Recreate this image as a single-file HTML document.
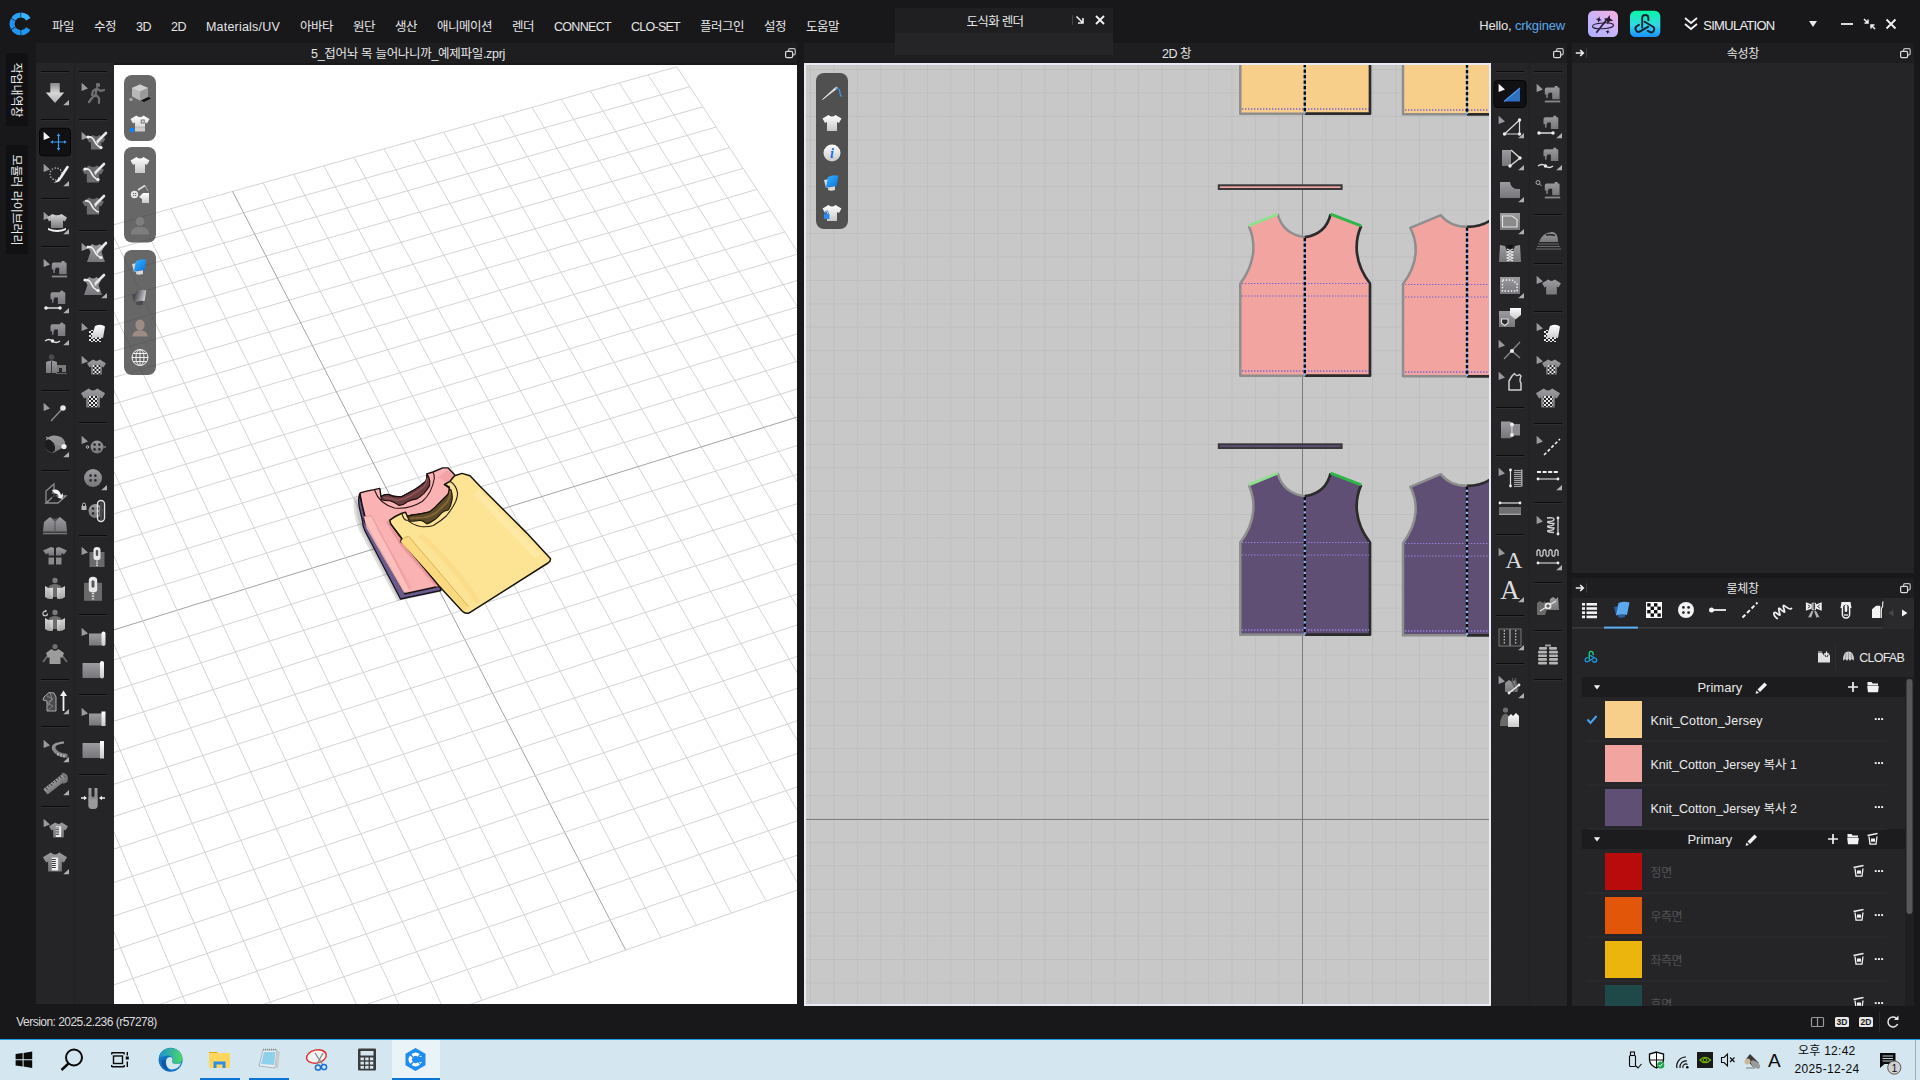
<!DOCTYPE html><html lang="ko"><head><meta charset="utf-8"><title>CLO</title><style>
*{box-sizing:border-box;margin:0;padding:0}
html,body{width:1920px;height:1080px;overflow:hidden;background:#18181b}
body{font-family:"Liberation Sans","Noto Sans CJK KR",sans-serif;font-size:13px;color:#e4e4e4;position:relative}
.abs{position:absolute}
.t{position:absolute;white-space:nowrap;line-height:1}
.menu span{position:absolute;top:18px;font-size:13px;line-height:16px;white-space:nowrap;color:#e6e6e6}
.title{position:absolute;height:20px;background:#1e1e21;font-size:12.5px;line-height:20px;text-align:center;color:#e0e0e0}
.tb{position:absolute;background:#252528}
.sep{position:absolute;height:1px;background:#111113}
.row{position:absolute;left:1582px;width:322px}
svg{position:absolute;overflow:visible}
</style></head><body>
<div class="abs menu" style="left:0;top:0;width:1920px;height:43px;background:#18181b">
<div class="t" id="t1" style="left:52px;top:20.9px;font-size:12.5px;color:#e6e6e6;letter-spacing:-0.508px;">파일</div>
<div class="t" id="t2" style="left:94px;top:20.9px;font-size:12.5px;color:#e6e6e6;letter-spacing:-0.508px;">수정</div>
<div class="t" id="t3" style="left:136px;top:20.9px;font-size:12.5px;color:#e6e6e6;letter-spacing:-0.492px;">3D</div>
<div class="t" id="t4" style="left:171px;top:20.9px;font-size:12.5px;color:#e6e6e6;letter-spacing:-0.492px;">2D</div>
<div class="t" id="t5" style="left:206px;top:20.9px;font-size:12.5px;color:#e6e6e6;letter-spacing:0.204px;">Materials/UV</div>
<div class="t" id="t6" style="left:300px;top:20.9px;font-size:12.5px;color:#e6e6e6;letter-spacing:-0.505px;">아바타</div>
<div class="t" id="t7" style="left:353px;top:20.9px;font-size:12.5px;color:#e6e6e6;letter-spacing:-0.508px;">원단</div>
<div class="t" id="t8" style="left:395px;top:20.9px;font-size:12.5px;color:#e6e6e6;letter-spacing:-0.508px;">생산</div>
<div class="t" id="t9" style="left:437px;top:20.9px;font-size:12.5px;color:#e6e6e6;letter-spacing:-0.503px;">애니메이션</div>
<div class="t" id="t10" style="left:512px;top:20.9px;font-size:12.5px;color:#e6e6e6;letter-spacing:-0.508px;">렌더</div>
<div class="t" id="t11" style="left:554px;top:20.9px;font-size:12.5px;color:#e6e6e6;letter-spacing:-0.688px;">CONNECT</div>
<div class="t" id="t12" style="left:631px;top:20.9px;font-size:12.5px;color:#e6e6e6;letter-spacing:-0.741px;">CLO-SET</div>
<div class="t" id="t13" style="left:700px;top:20.9px;font-size:12.5px;color:#e6e6e6;letter-spacing:-0.504px;">플러그인</div>
<div class="t" id="t14" style="left:764px;top:20.9px;font-size:12.5px;color:#e6e6e6;letter-spacing:-0.508px;">설정</div>
<div class="t" id="t15" style="left:806px;top:20.9px;font-size:12.5px;color:#e6e6e6;letter-spacing:-0.505px;">도움말</div>
</div>
<svg width="0" height="0" style="left:0;top:0"><defs>
<linearGradient id="gg" x1="0" y1="0" x2="0" y2="1"><stop offset="0" stop-color="#9c9ca0"/><stop offset="1" stop-color="#77777b"/></linearGradient>
<linearGradient id="gw" x1="0" y1="0" x2="0" y2="1"><stop offset="0" stop-color="#ffffff"/><stop offset="1" stop-color="#c8c8c8"/></linearGradient>
<linearGradient id="gb" x1="0" y1="0" x2="1" y2="1"><stop offset="0" stop-color="#35b6ff"/><stop offset="1" stop-color="#0a6fe0"/></linearGradient>
<linearGradient id="gpink" x1="1" y1="0" x2="0.2" y2="1"><stop offset="0" stop-color="#fbb0dc"/><stop offset=".6" stop-color="#c4b4fa"/><stop offset="1" stop-color="#b4b0ff"/></linearGradient><linearGradient id="gdn" x1="0" y1="0" x2="0" y2="1"><stop offset="0" stop-color="#8a8a8c"/><stop offset=".5" stop-color="#d8d8d8"/><stop offset="1" stop-color="#b0b0b0"/></linearGradient><linearGradient id="gw2" x1="0" y1="0" x2="0" y2="1"><stop offset="0" stop-color="#d4d4d4"/><stop offset="1" stop-color="#7c7c80"/></linearGradient>
<linearGradient id="ggreen" x1="0" y1="0" x2="0" y2="1"><stop offset="0" stop-color="#08f5a4"/><stop offset=".55" stop-color="#32d8e6"/><stop offset="1" stop-color="#1890ff"/></linearGradient>
<linearGradient id="glogo" x1="0" y1="0" x2="1" y2="1"><stop offset="0" stop-color="#3ec0ff"/><stop offset="1" stop-color="#1478e6"/></linearGradient>
<pattern id="chk" width="4" height="4" patternUnits="userSpaceOnUse"><rect width="4" height="4" fill="#e8e8e8"/><rect width="2" height="2" fill="#222"/><rect x="2" y="2" width="2" height="2" fill="#222"/></pattern>
</defs></svg><svg style="left:0px;top:0px" width="44" height="44" viewBox="0 0 44 44" ><path d="M30.48,29.89 A11.3,11.3 0 0 1 21.29,35.19 L21.12,30.20 A6.3,6.3 0 0 0 26.24,27.24Z" fill="#2196f3"/><path d="M20.51,35.19 A11.3,11.3 0 0 1 11.32,29.89 L15.56,27.24 A6.3,6.3 0 0 0 20.68,30.20Z" fill="#2196f3"/><path d="M10.92,29.21 A11.3,11.3 0 0 1 10.92,18.59 L15.34,20.94 A6.3,6.3 0 0 0 15.34,26.86Z" fill="#2591f0"/><path d="M11.32,17.91 A11.3,11.3 0 0 1 20.51,12.61 L20.68,17.60 A6.3,6.3 0 0 0 15.56,20.56Z" fill="#2aa2f6"/><path d="M21.29,12.61 A11.3,11.3 0 0 1 30.48,17.91 L26.24,20.56 A6.3,6.3 0 0 0 21.12,17.60Z" fill="#38b4fc"/></svg>
<div class="abs" style="left:895px;top:8px;width:218px;height:47px;background:#252528;z-index:5"></div>
<div class="abs" style="left:895px;top:8px;width:218px;height:25px;background:#1f1f22;z-index:5"></div>
<div class="t" id="t16" style="left:966.6px;top:15.6px;font-size:12.5px;color:#e6e6e6;letter-spacing:-0.731px;z-index:6;">도식화 렌더</div>
<svg style="z-index:6;left:0px;top:0px" width="1120" height="60" viewBox="0 0 1120 60" ><line x1="1072.5" y1="15" x2="1072.5" y2="25" stroke="#444" stroke-width="1"/><path d="M1076.5,16.5 L1083,23 M1083,18 V23 H1078" stroke="#f0f0f0" stroke-width="1.6" fill="none"/><path d="M1096,16 L1104,24 M1104,16 L1096,24" stroke="#f4f4f4" stroke-width="1.8" fill="none"/></svg>
<div class="t" id="t17" style="left:1479.3px;top:19px;font-size:13px;color:#e6e6e6;letter-spacing:-0.164px;">Hello, <span style="color:#5ba8e8">crkginew</span></div>
<svg style="left:0px;top:0px" width="1920" height="44" viewBox="0 0 1920 44" ><rect x="1588" y="10.8" width="30" height="26.2" rx="5.5" fill="url(#gpink)"/><g stroke="#2a1c30" fill="none"><path d="M1596.3,32.7 L1606.8,19.5" stroke-width="1.7"/><ellipse cx="1603" cy="25.8" rx="10.6" ry="2.9" stroke-width="1" transform="rotate(-3 1603 25.8)"/></g><path d="M1607.3,13.8 L1608.644,17.256 L1612.1,18.6 L1608.644,19.944000000000003 L1607.3,23.400000000000002 L1605.956,19.944000000000003 L1602.5,18.6 L1605.956,17.256Z M1597.8,17.5 L1598.668,19.732000000000003 L1600.8999999999999,20.6 L1598.668,21.468 L1597.8,23.700000000000003 L1596.932,21.468 L1594.7,20.6 L1596.932,19.732000000000003Z M1609,28.200000000000003 L1609.672,29.928 L1611.4,30.6 L1609.672,31.272000000000002 L1609,33.0 L1608.328,31.272000000000002 L1606.6,30.6 L1608.328,29.928Z" fill="#2a1c30" transform="rotate(12 1603 25)"/><rect x="1630" y="10.8" width="30.3" height="26.2" rx="5.5" fill="url(#ggreen)"/><g fill="none" stroke="#14222e" stroke-width="1.9" transform="translate(1645 25.3) scale(1.0)"><path d="M-2.8,2.200 V-7.200 A3.1,3.1 0 0 1 3.4,-7.200 V-5" stroke="#14222e" stroke-linecap="round" transform="rotate(0)"/><path d="M-2.8,2.200 V-7.200 A3.1,3.1 0 0 1 3.4,-7.200 V-5" stroke="#14222e" stroke-linecap="round" transform="rotate(120)"/><path d="M-2.8,2.200 V-7.200 A3.1,3.1 0 0 1 3.4,-7.200 V-5" stroke="#14222e" stroke-linecap="round" transform="rotate(240)"/></g><path d="M1685,18 l6,5 6,-5 M1685,24 l6,5 6,-5" stroke="#f2f2f2" stroke-width="1.8" fill="none"/><path d="M1809,21 h8 l-4,6z" fill="#e8e8e8"/><path d="M1841,24 h12" stroke="#f2f2f2" stroke-width="1.8"/><path d="M1864,19 l4,4 M1868,19.5 V23 H1864.5 M1875,29 l-4,-4 M1871,28.5 V25 H1874.5" stroke="#f2f2f2" stroke-width="1.5" fill="none"/><path d="M1886.5,19.5 l9,9 M1895.5,19.5 l-9,9" stroke="#f2f2f2" stroke-width="1.8"/></svg><div class="t" id="t18" style="left:1703.3px;top:19px;font-size:13px;color:#eee;letter-spacing:-0.730px;">SIMULATION</div>
<div class="abs" style="left:6px;top:53px;width:22px;height:73px;background:#111113"></div>
<div class="abs" style="left:6px;top:145px;width:22px;height:109px;background:#111113"></div>
<div class="t" style="left:15.6px;top:90.3px;width:0;height:0"><div class="t" style="left:-40px;top:-6px;width:80px;text-align:center;font-size:12px;color:#ececec;transform:rotate(90deg);letter-spacing:-.1px">작업내역창</div></div>
<div class="t" style="left:15.6px;top:200.2px;width:0;height:0"><div class="t" style="left:-60px;top:-6px;width:120px;text-align:center;font-size:12px;color:#ececec;transform:rotate(90deg);letter-spacing:-.05px">모듈러 라이브러리</div></div>
<div class="title" style="left:36px;top:43px;width:761px"></div>
<div class="t" id="t19" style="left:311px;top:47.8px;font-size:12.5px;color:#e4e4e4;letter-spacing:-0.301px;">5_접어놔 목 늘어나니까_예제파일.zprj</div>
<svg style="left:785px;top:48px" width="12" height="10" viewBox="0 0 12 10" ><rect x="3.6" y="0.6" width="6.6" height="6.2" rx="1.3" fill="none" stroke="#bdbdbd" stroke-width="1.2"/><rect x="0.6" y="3.4" width="7" height="6.2" rx="1.3" fill="#1e1e21" stroke="#dcdcdc" stroke-width="1.2"/></svg>
<div class="tb" style="left:36px;top:63px;width:78px;height:941px"></div>
<div class="abs" style="left:74px;top:63px;width:1px;height:941px;background:#202023"></div>
<svg style="left:0px;top:0px" width="120" height="1010" viewBox="0 0 120 1010" ><rect x="41" y="71" width="28" height="1" fill="#0b0b0c"/><rect x="41" y="72" width="28" height="1" fill="#2e2e31"/><rect x="41" y="119" width="28" height="1" fill="#0b0b0c"/><rect x="41" y="120" width="28" height="1" fill="#2e2e31"/><rect x="41" y="198" width="28" height="1" fill="#0b0b0c"/><rect x="41" y="199" width="28" height="1" fill="#2e2e31"/><rect x="41" y="246" width="28" height="1" fill="#0b0b0c"/><rect x="41" y="247" width="28" height="1" fill="#2e2e31"/><rect x="41" y="390" width="28" height="1" fill="#0b0b0c"/><rect x="41" y="391" width="28" height="1" fill="#2e2e31"/><rect x="41" y="470" width="28" height="1" fill="#0b0b0c"/><rect x="41" y="471" width="28" height="1" fill="#2e2e31"/><rect x="41" y="679" width="28" height="1" fill="#0b0b0c"/><rect x="41" y="680" width="28" height="1" fill="#2e2e31"/><rect x="41" y="726" width="28" height="1" fill="#0b0b0c"/><rect x="41" y="727" width="28" height="1" fill="#2e2e31"/><rect x="41" y="806" width="28" height="1" fill="#0b0b0c"/><rect x="41" y="807" width="28" height="1" fill="#2e2e31"/><rect x="79" y="71" width="28" height="1" fill="#0b0b0c"/><rect x="79" y="72" width="28" height="1" fill="#2e2e31"/><rect x="79" y="119" width="28" height="1" fill="#0b0b0c"/><rect x="79" y="120" width="28" height="1" fill="#2e2e31"/><rect x="79" y="230" width="28" height="1" fill="#0b0b0c"/><rect x="79" y="231" width="28" height="1" fill="#2e2e31"/><rect x="79" y="310" width="28" height="1" fill="#0b0b0c"/><rect x="79" y="311" width="28" height="1" fill="#2e2e31"/><rect x="79" y="422" width="28" height="1" fill="#0b0b0c"/><rect x="79" y="423" width="28" height="1" fill="#2e2e31"/><rect x="79" y="535" width="28" height="1" fill="#0b0b0c"/><rect x="79" y="536" width="28" height="1" fill="#2e2e31"/><rect x="79" y="614" width="28" height="1" fill="#0b0b0c"/><rect x="79" y="615" width="28" height="1" fill="#2e2e31"/><rect x="79" y="694" width="28" height="1" fill="#0b0b0c"/><rect x="79" y="695" width="28" height="1" fill="#2e2e31"/><rect x="79" y="774" width="28" height="1" fill="#0b0b0c"/><rect x="79" y="775" width="28" height="1" fill="#2e2e31"/><g transform="translate(55 93)"><path d="M-4.700,-10 H4.700 V-0.5 H9.200 L0,10 L-9.200,-0.5 H-4.700Z" fill="url(#gdn)"/><path d="M8.2,12.3 L14,7 L14,12.3Z" fill="#b0b0b0"/></g><g transform="translate(55 142)"><rect x="-15.500" y="-13.700" width="31" height="27.500" rx="3.5" fill="#111113" stroke="#050506"/><path d="M-11.4,-10.2 L-11.4,-2 L-5,-4.4Z" fill="#f4f4f4"/><g stroke="#3a9af0" stroke-width="1.2" fill="#3a9af0"><path d="M-3,0 H10 M3.5,-7 V7" fill="none"/><path d="M3.5,-8.800 l1.800,2.800 h-3.600z M3.5,8.800 l1.800,-2.800 h-3.600z M-4.800,0 l2.800,-1.800 v3.600z M11.800,0 l-2.800,-1.800 v3.600z" stroke="none"/></g></g><g transform="translate(55 174)"><path d="M-11.4,-10.2 L-11.4,-2 L-5,-4.4Z" fill="#9a9a9e"/><circle cx="1" cy="0" r="6" fill="none" stroke="#bdbdbd" stroke-width="1.3" stroke-dasharray="1.3 1.6"/><path d="M6,3 L12.5,-7" stroke="#eee" stroke-width="2.6" stroke-linecap="round"/><path d="M6.5,4 Q5,9 -1.5,8.5 Q3,7 3.5,3Z" fill="#eee"/><path d="M8.2,12.3 L14,7 L14,12.3Z" fill="#b0b0b0"/></g><g transform="translate(55 222)"><path d="M-11.4,-10.2 L-11.4,-2 L-5,-4.4Z" fill="#9a9a9e"/><path d="M-2.5,-8 Q2,-5.5 6.5,-8 L12,-4.5 L10,-0.5 L8,-1.5 L8,6 L-4,6 L-4,-1.5 L-6,-0.5 L-8,-4.5Z" fill="url(#gw2)"/><path d="M-7,6 Q2,10 11,6 L11,8 Q2,12 -7,8Z" fill="#f0f0f0"/><path d="M8.2,12.3 L14,7 L14,12.3Z" fill="#b0b0b0"/></g><g transform="translate(55 269)"><path d="M-11.4,-10.2 L-11.4,-2 L-5,-4.4Z" fill="#9a9a9e"/><g transform="translate(4.2 0)"><path d="M-7.4,-4.5 Q-7.4,-6.5 -5.4,-6.5 H2.4 V-8 H5.4 V-6.5 H6.4 Q7.4,-6.5 7.4,-5.5 V5.3 H0 V-1.3 H-3.7 V0.5 H-4.4 V3.9 H-5.9 V0.5 H-7.4Z" fill="url(#gg)"/></g><rect x="-3.2" y="6.6" width="15.4" height="1.8" fill="#88888c"/></g><g transform="translate(55 301)"><g transform="translate(2.9 -2.2)"><path d="M-7.4,-4.5 Q-7.4,-6.5 -5.4,-6.5 H2.4 V-8 H5.4 V-6.5 H6.4 Q7.4,-6.5 7.4,-5.5 V5.3 H0 V-1.3 H-3.7 V0.5 H-4.4 V3.9 H-5.9 V0.5 H-7.4Z" fill="url(#gg)"/></g><path d="M-9,7 h14" stroke="#e8e8e8" stroke-width="1.4"/><circle cx="-9" cy="7" r="1.8" fill="#eee"/><circle cx="5" cy="7" r="1.8" fill="#eee"/><path d="M8.2,12.3 L14,7 L14,12.3Z" fill="#b0b0b0"/></g><g transform="translate(55 333)"><g transform="translate(2.9 -2.2)"><path d="M-7.4,-4.5 Q-7.4,-6.5 -5.4,-6.5 H2.4 V-8 H5.4 V-6.5 H6.4 Q7.4,-6.5 7.4,-5.5 V5.3 H0 V-1.3 H-3.7 V0.5 H-4.4 V3.9 H-5.9 V0.5 H-7.4Z" fill="url(#gg)"/></g><path d="M-10,8 Q-6,5 -2.5,8 T5,8" stroke="#e0e0e0" stroke-width="1.4" fill="none"/><circle cx="-2.5" cy="8" r="1.8" fill="#eee"/><path d="M8.2,12.3 L14,7 L14,12.3Z" fill="#b0b0b0"/></g><g transform="translate(55 365)"><circle cx="-3.5" cy="-8" r="2.8" fill="#4a4a4c"/><path d="M-9,-3 Q-3.5,-6 2,-3 V8 H-9Z" fill="url(#gg)"/><path d="M-3.5,-4 V8" stroke="#3a3a3c" stroke-width="1"/><path d="M2,0 H11 V7 H7 V3 H4 V7 H2Z" fill="#7a7a7a"/><path d="M1,8.5 h11" stroke="#666" stroke-width="1"/></g><g transform="translate(55 413)"><path d="M-11.4,-10.2 L-11.4,-2 L-5,-4.4Z" fill="#9a9a9e"/><path d="M-4,8 L7,-4" stroke="#8c8c8c" stroke-width="1.4"/><circle cx="8" cy="-5" r="2.8" fill="#e4e4e4"/></g><g transform="translate(55 445)"><path d="M-9,-6 Q-3,-12 6,-8 Q12,-4 9,2 L-2,8 Q-9,8 -9,0Z" fill="url(#gg)"/><ellipse cx="-5" cy="1" rx="4.5" ry="7" transform="rotate(-25 -5 1)" fill="#1c1c1e"/><path d="M-9,-8 L8,1" stroke="#9a9a9a" stroke-width="1.2"/><circle cx="9" cy="1.5" r="2.6" fill="#f0f0f0"/><path d="M8.2,12.3 L14,7 L14,12.3Z" fill="#b0b0b0"/></g><g transform="translate(55 493)"><path d="M-9,-2 L-1,-9 V3 L-9,10Z M-9,10 L-1,3 H11 L3,10Z" fill="none" stroke="#8c8c8c" stroke-width="1.3"/><path d="M-3,-3 Q4,-5 6,2 L8,0 L7.5,6 L2,4.5 L4,3.5 Q2,-1 -3,1Z" fill="#f2f2f2"/><path d="M-3,-3 L-3,5 L3,5" fill="#111" opacity=".6"/></g><g transform="translate(55 525)"><path d="M-5,-8 L0,-5 L5,-8 L11,-3 L12,6 H-12 L-11,-3Z" fill="url(#gg)"/><path d="M-5,-8 L0,-3 L5,-8 L0,-6Z" fill="#555"/><path d="M0,-3 V6 M-12,6.5 h24" stroke="#555" stroke-width="1"/><path d="M-12,8.5 h24" stroke="#777" stroke-width="1.6"/></g><g transform="translate(55 557)"><path d="M-4,-10 L-1,-9 V-1.5 H-6.5 V-4 L-9,-2.5 L-12,-6.5Z M4,-10 L1,-9 V-1.5 H6.5 V-4 L9,-2.5 L12,-6.5Z" fill="url(#gg)"/><rect x="-6.5" y="0.5" width="5.5" height="7" fill="#8a8a8a"/><rect x="1" y="0.5" width="5.5" height="7" fill="#8a8a8a"/></g><g transform="translate(55 589)"><circle cx="0" cy="-8.5" r="2.7" fill="#7a7a7a"/><path d="M-6,-3 Q0,-7 6,-3 L4,8 H-4Z" fill="#6e6e6e"/><path d="M-10,-3 Q-6,0 -2,-1.5 V9.5 Q-6,11 -10,8Z" fill="url(#gw)" opacity=".8"/><path d="M10,-3 Q6,0 2,-1.5 V9.5 Q6,11 10,8Z" fill="url(#gw)" opacity=".8"/></g><g transform="translate(55 621)"><circle cx="0" cy="-8.5" r="2.7" fill="#7a7a7a"/><path d="M-6,-3 Q0,-7 6,-3 L4,8 H-4Z" fill="#6e6e6e"/><path d="M-10,-3 Q-6,0 -2,-1.5 V9.5 Q-6,11 -10,8Z" fill="url(#gw)" opacity=".8"/><path d="M10,-3 Q6,0 2,-1.5 V9.5 Q6,11 10,8Z" fill="url(#gw)" opacity=".8"/><path d="M-7.500,-7.500 a2.300,2.300 0 1 1 -2.300,-2.300" fill="none" stroke="#d0d0d0" stroke-width="1.1"/><path d="M-10.200,-11.600 l2.400,1.600 -2.400,1.400z" fill="#d0d0d0"/></g><g transform="translate(55 655)"><circle cx="0" cy="-8.5" r="2.6" fill="#6e6e6e"/><path d="M-12,7 L-6,-1 M12,7 L6,-1" stroke="#6a6a6a" stroke-width="2"/><path d="M-3.5,-6 Q0,-2.5 3.5,-6 L9,-2 L7,3 L5.5,2 V9 H-5.5 V2 L-7,3 L-9,-2Z" fill="#9c9c9c"/></g><g transform="translate(55 702)"><path d="M-11,-5 L-6,-9.5 L-1,-9 L1,-5 V9 H-8 V-1 L-12,-2Z" fill="#4a4a4c" stroke="#aaa" stroke-width="1"/><path d="M-8,-6 L-2,-3 L-8,1 L-2,4 L-7,8 M-5,-9 L-3,-3 L-7,4" stroke="#999" stroke-width=".7" fill="none"/><path d="M8.5,-7 V9" stroke="#f0f0f0" stroke-width="1.8"/><path d="M8.5,-11.5 L12,-6 H5Z" fill="#f0f0f0"/><path d="M8.2,12.3 L14,7 L14,12.3Z" fill="#b0b0b0"/></g><g transform="translate(55 750)"><path d="M-11.4,-10.2 L-11.4,-2 L-5,-4.4Z" fill="#9a9a9e"/><path d="M9,-8.500 Q-5,-7.500 -3,-0.500 Q0,6.500 12.500,8 V4 Q3.500,3 0.500,-1.500 Q-1,-5.500 9,-6.500Z" fill="url(#gg)"/><path d="M3,3 v3 M6,4 v3 M9,4.6 v3" stroke="#ddd" stroke-width=".9"/><path d="M8.2,12.3 L14,7 L14,12.3Z" fill="#b0b0b0"/></g><g transform="translate(55 783)"><g transform="rotate(-38)"><rect x="-13" y="-2.5" width="24" height="7" rx="1" fill="url(#gg)"/><path d="M-10,-2.5 v3 M-7,-2.5 v2 M-4,-2.5 v3 M-1,-2.5 v2 M2,-2.5 v3 M5,-2.5 v2 M8,-2.5 v3" stroke="#2a2a2c" stroke-width=".9"/></g><path d="M7,-9 Q13,-8 11,-2 Q9,0 6,-2" fill="none" stroke="#777" stroke-width="3"/><path d="M8.2,12.3 L14,7 L14,12.3Z" fill="#b0b0b0"/></g><g transform="translate(55 829)"><path d="M-11.4,-10.2 L-11.4,-2 L-5,-4.4Z" fill="#9a9a9e"/><g transform="translate(3.5 1) scale(.82)"><path transform="translate(0 0) scale(1)" d="M-4,-9 Q0,-5.5 4,-9 L11.5,-4.5 L8.5,0.5 L6.5,-0.5 L6.5,9 L-6.5,9 L-6.5,-0.5 L-8.5,0.5 L-11.5,-4.5Z" fill="url(#gg)"/><rect x="-3.2" y="-4.5" width="6.4" height="13" fill="#eee"/><path d="M-3.2,-2.5 h4 M-3.2,-0.5 h4 M-3.2,1.5 h4 M-3.2,3.5 h4 M-3.2,5.5 h4" stroke="#222" stroke-width=".9"/></g></g><g transform="translate(55 862)"><g transform="translate(0 0)"><path transform="translate(0 0) scale(1.05)" d="M-4,-9 Q0,-5.5 4,-9 L11.5,-4.5 L8.5,0.5 L6.5,-0.5 L6.5,9 L-6.5,9 L-6.5,-0.5 L-8.5,0.5 L-11.5,-4.5Z" fill="url(#gg)"/><rect x="-3.2" y="-4.5" width="6.4" height="13" fill="#eee"/><path d="M-3.2,-2.5 h4 M-3.2,-0.5 h4 M-3.2,1.5 h4 M-3.2,3.5 h4 M-3.2,5.5 h4" stroke="#222" stroke-width=".9"/></g><path d="M8.2,12.3 L14,7 L14,12.3Z" fill="#b0b0b0"/></g><g transform="translate(93 93)"><path d="M-11.4,-10.2 L-11.4,-2 L-5,-4.4Z" fill="#9a9a9e"/><g fill="#707070" stroke="#707070"><circle cx="5" cy="-8" r="2.2" stroke="none"/><path d="M4,-5 L2.5,1.5 L6,5 L6,10 M2.5,1.5 L-1,5 L-4,9 M4,-4.5 L0,-2 L-1,2 M4.5,-4 L8,-2 L11,-3" fill="none" stroke-width="2.2" stroke-linecap="round" stroke-linejoin="round"/></g></g><g transform="translate(93 142)"><path d="M-11.4,-10.2 L-11.4,-2 L-5,-4.4Z" fill="#9a9a9e"/><path transform="translate(3.2 0.3) scale(0.8)" d="M-4,-9 Q0,-5.5 4,-9 L11.5,-4.5 L8.5,0.5 L6.5,-0.5 L6.5,9 L-6.5,9 L-6.5,-0.5 L-8.5,0.5 L-11.5,-4.5Z" fill="#6c6c70"/><g transform="translate(3 0)"><path d="M-8,-5 C-2,-6 -2,0 1,3 S5,6 6,6" stroke="#f0f0f0" stroke-width="1.6" fill="none"/><circle cx="-8" cy="-5" r="1.6" fill="#f0f0f0"/><circle cx="5" cy="5.5" r="1.6" fill="#f0f0f0"/></g><g transform="translate(2 0)"><path d="M3,-1 L11,-9" stroke="#e6e6e6" stroke-width="2.6" stroke-linecap="round"/><path d="M2,2 L1,-1.5 L4,1Z" fill="#ddd"/></g></g><g transform="translate(93 174)"><path transform="translate(0 0) scale(0.95)" d="M-4,-9 Q0,-5.5 4,-9 L11.5,-4.5 L8.5,0.5 L6.5,-0.5 L6.5,9 L-6.5,9 L-6.5,-0.5 L-8.5,0.5 L-11.5,-4.5Z" fill="#6c6c70"/><g transform="translate(0 0)"><path d="M-8,-5 C-2,-6 -2,0 1,3 S5,6 6,6" stroke="#f0f0f0" stroke-width="1.6" fill="none"/><circle cx="-8" cy="-5" r="1.6" fill="#f0f0f0"/><circle cx="5" cy="5.5" r="1.6" fill="#f0f0f0"/></g><g transform="translate(0 -1)"><path d="M3,-1 L11,-9" stroke="#e6e6e6" stroke-width="2.6" stroke-linecap="round"/><path d="M2,2 L1,-1.5 L4,1Z" fill="#ddd"/></g></g><g transform="translate(93 206)"><path transform="translate(0 0) scale(0.95)" d="M-4,-9 Q0,-5.5 4,-9 L11.5,-4.5 L8.5,0.5 L6.5,-0.5 L6.5,9 L-6.5,9 L-6.5,-0.5 L-8.5,0.5 L-11.5,-4.5Z" fill="#6c6c70"/><g transform="translate(0 0)"><path d="M-8,-5 C-2,-6 -2,0 1,3 S5,6 6,6" stroke="#f0f0f0" stroke-width="1.6" fill="none"/></g><g transform="translate(0 -1)"><path d="M3,-1 L11,-9" stroke="#e6e6e6" stroke-width="2.6" stroke-linecap="round"/><path d="M2,2 L1,-1.5 L4,1Z" fill="#ddd"/></g></g><g transform="translate(93 253)"><path d="M-11.4,-10.2 L-11.4,-2 L-5,-4.4Z" fill="#9a9a9e"/><path transform="translate(3 0)" d="M-3.5,-9 Q0,-6 3.5,-9 L8,-6 L5.5,-1 L9,9 L-9,9 L-5.5,-1 L-8,-6Z" fill="url(#gg)"/><g transform="translate(3 -1)"><path d="M-8,-5 C-2,-6 -2,0 1,3 S5,6 6,6" stroke="#f0f0f0" stroke-width="1.6" fill="none"/><circle cx="-8" cy="-5" r="1.6" fill="#f0f0f0"/><circle cx="5" cy="5.5" r="1.6" fill="#f0f0f0"/></g><g transform="translate(2 -1)"><path d="M3,-1 L11,-9" stroke="#e6e6e6" stroke-width="2.6" stroke-linecap="round"/><path d="M2,2 L1,-1.5 L4,1Z" fill="#ddd"/></g></g><g transform="translate(93 286)"><path transform="translate(0 0)" d="M-3.5,-9 Q0,-6 3.5,-9 L8,-6 L5.5,-1 L9,9 L-9,9 L-5.5,-1 L-8,-6Z" fill="url(#gg)"/><g transform="translate(0 -1)"><path d="M-8,-5 C-2,-6 -2,0 1,3 S5,6 6,6" stroke="#f0f0f0" stroke-width="1.6" fill="none"/><circle cx="-8" cy="-5" r="1.6" fill="#f0f0f0"/><circle cx="5" cy="5.5" r="1.6" fill="#f0f0f0"/></g><g transform="translate(0 -2)"><path d="M3,-1 L11,-9" stroke="#e6e6e6" stroke-width="2.6" stroke-linecap="round"/><path d="M2,2 L1,-1.5 L4,1Z" fill="#ddd"/></g><path d="M8.2,12.3 L14,7 L14,12.3Z" fill="#b0b0b0"/></g><g transform="translate(93 333)"><path d="M-11.4,-10.2 L-11.4,-2 L-5,-4.4Z" fill="#9a9a9e"/><rect x="-4" y="-3" width="12" height="12" fill="url(#chk)"/><path d="M-2,6 L2,-7 Q8,-9.5 12,-6.5 L10,5 Q5,3 -2,6Z" fill="url(#gw)"/><path d="M-6,-4 L-4,-3 L-4,9 L8,9 L8,10 L-6,10Z" fill="#252528"/><path d="M-5,-4 L3,3" stroke="#252528" stroke-width="0"/></g><g transform="translate(93 366)"><path d="M-11.4,-10.2 L-11.4,-2 L-5,-4.4Z" fill="#9a9a9e"/><g transform="translate(3.5 1)"><path transform="translate(0 0) scale(0.82)" d="M-4,-9 Q0,-5.5 4,-9 L11.5,-4.5 L8.5,0.5 L6.5,-0.5 L6.5,9 L-6.5,9 L-6.5,-0.5 L-8.5,0.5 L-11.5,-4.5Z" fill="url(#gg)"/><rect x="-3.5" y="-2" width="7" height="9" fill="url(#chk)"/></g></g><g transform="translate(93 398)"><path transform="translate(0 0) scale(1.05)" d="M-4,-9 Q0,-5.5 4,-9 L11.5,-4.5 L8.5,0.5 L6.5,-0.5 L6.5,9 L-6.5,9 L-6.5,-0.5 L-8.5,0.5 L-11.5,-4.5Z" fill="url(#gg)"/><rect x="-4.5" y="-2" width="9" height="11" fill="url(#chk)"/></g><g transform="translate(93 446)"><path d="M-11.4,-10.2 L-11.4,-2 L-5,-4.4Z" fill="#9a9a9e"/><g transform="translate(4 1)"><circle r="6.5" fill="url(#gg)"/><circle cx="-2.4" cy="-2.4" r="1.3" fill="#2a2a2c"/><circle cx="-2.4" cy="2.4" r="1.3" fill="#2a2a2c"/><circle cx="2.4" cy="-2.4" r="1.3" fill="#2a2a2c"/><circle cx="2.4" cy="2.4" r="1.3" fill="#2a2a2c"/></g><path d="M-4,1 h-1.5 M10.5,1 h2.5" stroke="#aaa" stroke-width="1"/><circle cx="-5.5" cy="1" r="1.3" fill="none" stroke="#ccc" stroke-width=".8"/></g><g transform="translate(93 478)"><g transform="translate(0 0)"><circle r="9" fill="url(#gg)"/><circle cx="-2.4" cy="-2.4" r="1.3" fill="#2a2a2c"/><circle cx="-2.4" cy="2.4" r="1.3" fill="#2a2a2c"/><circle cx="2.4" cy="-2.4" r="1.3" fill="#2a2a2c"/><circle cx="2.4" cy="2.4" r="1.3" fill="#2a2a2c"/></g><path d="M8.2,12.3 L14,7 L14,12.3Z" fill="#b0b0b0"/></g><g transform="translate(93 510)"><g transform="translate(-9 -4)"><rect x="-2.5" y="0" width="5" height="4" fill="#b8b8b8"/><path d="M-1.5,0 v-1.5 a1.5,1.5 0 0 1 3,0 v1.5" fill="none" stroke="#b8b8b8" stroke-width="1"/></g><g transform="translate(2.5 1)"><circle r="7" fill="url(#gg)"/><circle cx="-2.4" cy="-2.4" r="1.3" fill="#2a2a2c"/><circle cx="-2.4" cy="2.4" r="1.3" fill="#2a2a2c"/><circle cx="2.4" cy="-2.4" r="1.3" fill="#2a2a2c"/><circle cx="2.4" cy="2.4" r="1.3" fill="#2a2a2c"/></g><path d="M7,-7.500 a2,2 0 0 1 2.500,0 v17 a2,2 0 0 1 -2.500,0z" fill="#4a4a4d"/><rect x="4.500" y="-9.500" width="7" height="21" rx="3.5" fill="none" stroke="#e4e4e4" stroke-width="1.4"/></g><g transform="translate(93 557)"><path d="M-11.4,-10.2 L-11.4,-2 L-5,-4.4Z" fill="#9a9a9e"/><g transform="translate(4 1)"><rect x="-7.5" y="-6" width="15" height="15" fill="#6a6a6a"/><path d="M0,-2 V9" stroke="#d8d8d8" stroke-width="2" stroke-dasharray="1.2 1"/><path d="M-3.5,-8 Q-3.5,-11 0,-11 Q3.5,-11 3.5,-8 V0 Q3.5,2 0,2 Q-3.5,2 -3.5,0Z" fill="#e8e8e8"/><rect x="-1.2" y="-8" width="2.4" height="6" rx="1" fill="#555"/></g></g><g transform="translate(93 590)"><g transform="scale(1.2)"><g transform="translate(0 0)"><rect x="-7.5" y="-6" width="15" height="15" fill="#6a6a6a"/><path d="M0,-2 V9" stroke="#d8d8d8" stroke-width="2" stroke-dasharray="1.2 1"/><path d="M-3.5,-8 Q-3.5,-11 0,-11 Q3.5,-11 3.5,-8 V0 Q3.5,2 0,2 Q-3.5,2 -3.5,0Z" fill="#e8e8e8"/><rect x="-1.2" y="-8" width="2.4" height="6" rx="1" fill="#555"/></g></g></g><g transform="translate(93 638)"><path d="M-11.4,-10.2 L-11.4,-2 L-5,-4.4Z" fill="#9a9a9e"/><g transform="translate(4 1)"><rect x="-8.0" y="-5.5" width="13" height="12" fill="url(#gg)"/><rect x="4.5" y="-7.5" width="4" height="14.5" rx="2" fill="url(#gw)"/></g></g><g transform="translate(93 670)"><g transform="translate(0 0)"><rect x="-10.5" y="-7.0" width="18" height="15" fill="url(#gg)"/><rect x="7.0" y="-9.0" width="4" height="17.5" rx="2" fill="url(#gw)"/></g></g><g transform="translate(93 718)"><path d="M-11.4,-10.2 L-11.4,-2 L-5,-4.4Z" fill="#9a9a9e"/><g transform="translate(4 1)"><rect x="-8.0" y="-5.5" width="13" height="12" fill="url(#gg)"/><rect x="4.5" y="-7.5" width="4" height="14.5" rx="0" fill="url(#gw)"/></g></g><g transform="translate(93 750)"><g transform="translate(0 0)"><rect x="-10.5" y="-7.0" width="18" height="15" fill="url(#gg)"/><rect x="7.0" y="-9.0" width="4" height="17.5" rx="0" fill="url(#gw)"/></g></g><g transform="translate(93 798)"><path d="M-4.5,-10 H-1.5 V-2 Q0,0 1.5,-2 V-10 H4.5 V8 Q4.5,11 0,11 Q-4.5,11 -4.5,8Z" fill="url(#gg)"/><path d="M-4.5,-1 Q0,4 4.5,-1 V8 Q4.5,11 0,11 Q-4.5,11 -4.5,8Z" fill="#9a9a9a"/><path d="M-12,0 h4 M12,0 h-4" stroke="#eee" stroke-width="1.3"/><path d="M-9,-2.2 l3,2.2 -3,2.2z M9,-2.2 l-3,2.2 3,2.2z" fill="#eee"/></g></svg>
<div class="abs" style="left:114px;top:65px;width:683px;height:939px;background:#fff;overflow:hidden">
<svg style="left:0;top:0" width="683" height="939" viewBox="114 65 683 939">
<g stroke-width="1" fill="none"><line x1="676.8" y1="66.8" x2="1137.0" y2="771.4" stroke="#d4d4d4"/><line x1="676.8" y1="66.8" x2="-244.2" y2="325.2" stroke="#d4d4d4"/><line x1="648.1" y1="74.8" x2="1104.2" y2="782.9" stroke="#d4d4d4"/><line x1="689.8" y1="86.7" x2="-235.4" y2="348.1" stroke="#d4d4d4"/><line x1="619.3" y1="82.9" x2="1071.2" y2="794.4" stroke="#d4d4d4"/><line x1="702.9" y1="106.8" x2="-226.6" y2="371.1" stroke="#d4d4d4"/><line x1="590.4" y1="91.0" x2="1038.0" y2="806.0" stroke="#d4d4d4"/><line x1="716.2" y1="127.1" x2="-217.6" y2="394.5" stroke="#d4d4d4"/><line x1="561.3" y1="99.2" x2="1004.7" y2="817.7" stroke="#d4d4d4"/><line x1="729.6" y1="147.6" x2="-208.6" y2="418.1" stroke="#d4d4d4"/><line x1="532.1" y1="107.4" x2="971.2" y2="829.4" stroke="#d4d4d4"/><line x1="743.1" y1="168.4" x2="-199.5" y2="442.0" stroke="#d4d4d4"/><line x1="502.8" y1="115.6" x2="937.5" y2="841.1" stroke="#d4d4d4"/><line x1="756.8" y1="189.4" x2="-190.2" y2="466.2" stroke="#d4d4d4"/><line x1="473.3" y1="123.9" x2="903.6" y2="853.0" stroke="#d4d4d4"/><line x1="770.7" y1="210.6" x2="-180.8" y2="490.6" stroke="#d4d4d4"/><line x1="443.7" y1="132.2" x2="869.6" y2="864.9" stroke="#d4d4d4"/><line x1="784.7" y1="232.0" x2="-171.4" y2="515.4" stroke="#d4d4d4"/><line x1="413.9" y1="140.5" x2="835.3" y2="876.8" stroke="#d4d4d4"/><line x1="798.9" y1="253.7" x2="-161.8" y2="540.4" stroke="#d4d4d4"/><line x1="384.1" y1="148.9" x2="800.9" y2="888.9" stroke="#d4d4d4"/><line x1="813.2" y1="275.7" x2="-152.1" y2="565.7" stroke="#d4d4d4"/><line x1="354.0" y1="157.3" x2="766.2" y2="901.0" stroke="#d4d4d4"/><line x1="827.7" y1="297.8" x2="-142.3" y2="591.4" stroke="#d4d4d4"/><line x1="323.9" y1="165.8" x2="731.4" y2="913.2" stroke="#d4d4d4"/><line x1="842.3" y1="320.2" x2="-132.3" y2="617.3" stroke="#d4d4d4"/><line x1="293.6" y1="174.3" x2="696.4" y2="925.4" stroke="#d4d4d4"/><line x1="857.1" y1="342.9" x2="-122.3" y2="643.6" stroke="#d4d4d4"/><line x1="263.1" y1="182.9" x2="661.1" y2="937.7" stroke="#d4d4d4"/><line x1="872.1" y1="365.8" x2="-112.1" y2="670.2" stroke="#d4d4d4"/><line x1="232.5" y1="191.4" x2="625.7" y2="950.1" stroke="#a4a4a4"/><line x1="887.2" y1="389.0" x2="-101.8" y2="697.1" stroke="#a4a4a4"/><line x1="201.8" y1="200.1" x2="590.1" y2="962.5" stroke="#d4d4d4"/><line x1="902.5" y1="412.5" x2="-91.4" y2="724.3" stroke="#d4d4d4"/><line x1="170.9" y1="208.7" x2="554.3" y2="975.0" stroke="#d4d4d4"/><line x1="918.0" y1="436.2" x2="-80.8" y2="751.9" stroke="#d4d4d4"/><line x1="139.9" y1="217.4" x2="518.2" y2="987.6" stroke="#d4d4d4"/><line x1="933.7" y1="460.2" x2="-70.1" y2="779.8" stroke="#d4d4d4"/><line x1="108.7" y1="226.2" x2="482.0" y2="1000.3" stroke="#d4d4d4"/><line x1="949.5" y1="484.5" x2="-59.3" y2="808.1" stroke="#d4d4d4"/><line x1="77.4" y1="235.0" x2="445.6" y2="1013.0" stroke="#d4d4d4"/><line x1="965.6" y1="509.0" x2="-48.3" y2="836.7" stroke="#d4d4d4"/><line x1="46.0" y1="243.8" x2="408.9" y2="1025.8" stroke="#d4d4d4"/><line x1="981.8" y1="533.9" x2="-37.2" y2="865.7" stroke="#d4d4d4"/><line x1="14.3" y1="252.7" x2="372.1" y2="1038.7" stroke="#d4d4d4"/><line x1="998.2" y1="559.0" x2="-26.0" y2="895.1" stroke="#d4d4d4"/><line x1="-17.4" y1="261.6" x2="335.0" y2="1051.6" stroke="#d4d4d4"/><line x1="1014.9" y1="584.5" x2="-14.6" y2="924.9" stroke="#d4d4d4"/><line x1="-49.4" y1="270.6" x2="297.7" y2="1064.7" stroke="#d4d4d4"/><line x1="1031.7" y1="610.2" x2="-3.0" y2="955.0" stroke="#d4d4d4"/><line x1="-81.4" y1="279.6" x2="260.3" y2="1077.8" stroke="#d4d4d4"/><line x1="1048.7" y1="636.3" x2="8.6" y2="985.5" stroke="#d4d4d4"/><line x1="-113.7" y1="288.6" x2="222.5" y2="1091.0" stroke="#d4d4d4"/><line x1="1065.9" y1="662.7" x2="20.5" y2="1016.5" stroke="#d4d4d4"/><line x1="-146.1" y1="297.7" x2="184.6" y2="1104.2" stroke="#d4d4d4"/><line x1="1083.4" y1="689.3" x2="32.5" y2="1047.8" stroke="#d4d4d4"/><line x1="-178.6" y1="306.8" x2="146.5" y2="1117.5" stroke="#d4d4d4"/><line x1="1101.0" y1="716.4" x2="44.7" y2="1079.6" stroke="#d4d4d4"/><line x1="-211.3" y1="316.0" x2="108.1" y2="1130.9" stroke="#d4d4d4"/><line x1="1118.9" y1="743.7" x2="57.0" y2="1111.8" stroke="#d4d4d4"/><line x1="-244.2" y1="325.2" x2="69.5" y2="1144.4" stroke="#d4d4d4"/><line x1="1137.0" y1="771.4" x2="69.5" y2="1144.4" stroke="#d4d4d4"/></g>
<path d="M354,496 Q352,512 359,530 L397,601 L441,592 L404,545Z" fill="#000" opacity=".13"/><path d="M356,495 Q355,512 361,529 L399,600 L441,591 L404,545Z" fill="#000" opacity=".1"/><path d="M359.5,494 Q357.800,500 359.500,508 L362.500,521 Q362.500,526 365,531 L400.500,599 L441,590.500 L439,584 L404,592 L367,526Z" fill="#6b5a8c" stroke="#17121e" stroke-width="1.3" stroke-linejoin="round"/><path d="M360.2,492.8 Q366,491 374.1,489.6 L379.8,488.4 L381,496.6 Q385,494 388.9,494.7 Q395,497.5 401.9,496.6 Q408,493.5 414.8,489.6 Q421,485.5 425.9,481.3 Q427.5,477.5 426.9,473.8 L432.9,472 L442.6,467.9 L448.1,467.9 L454.600,474.800 L470,500 L439.3,586.3 L405,593.800 L367.500,527 L364,520 L364.800,515.500 Q361.500,503 361.200,499.500 Q360,496 360.2,492.8Z" fill="#fab2b2" stroke="#1a1010" stroke-width="1.4" stroke-linejoin="round"/><path d="M363.9,517 L371.3,515.6 L409,590 L404,593 L366.500,528Z" fill="#fcc0bf" opacity=".9"/><path d="M363.9,517 L371.3,515.6 L410,589" fill="none" stroke="#e39a9c" stroke-width="1"/><path d="M377,528 L412,588" fill="none" stroke="#f09fa2" stroke-width="1.2" opacity=".7"/><path d="M386,522 L390,519 L404,540 L440,586 L436,587 L400,545Z" fill="#e58f93" opacity=".75"/><path d="M438,478 Q447,480 451,488 L456,478 L447,470Z" fill="#ef9da0" opacity=".7"/><path d="M374.500,490 Q379,503.500 394.4,508 Q409.3,509.500 422.2,501.500 Q432,493 434.3,478.5 Q434.300,474 432.9,472" fill="none" stroke="#2a1616" stroke-width="1.1"/><path d="M381,496.6 Q385,494 388.9,494.7 Q395,497.500 401.9,496.6 Q408,493.500 414.8,489.6 Q421,485.500 425.9,481.3 Q427.500,477.500 426.9,473.800 L428.700,476.700 Q430.500,481 429.6,485.9 Q427,490 424,493.3 Q420,497 416.7,498.9 Q412,499.500 407.4,501.7 Q403,505.500 399,505.4 Q394,502 389.8,500.7 Q385,501 381.5,499.8Z" fill="#6b3d3f" stroke="#1a0d0d" stroke-width="1.1" stroke-linejoin="round"/><path d="M384,497.500 Q392,498.500 398,500.500 Q405,499 411,495.500 Q419,491 424,486.500 Q427,482 427.500,478" fill="none" stroke="#8d5558" stroke-width="1.5"/><path d="M389.8,520.2 Q395,516 401.9,513.2 L405.6,512.3 L407.4,516.5 Q412,514.5 416.7,514.6 Q423,513.5 429.6,511.9 Q435,508 438.9,503.5 Q444,498.5 448.1,494.3 Q450,490 449.1,486.9 L444.4,484.5 L450,481.3 L454.6,475.7 L462,473.4 L470,475.7 L480,486.3 L526.3,532.6 L550.4,558.5 Q551,561 548,563 L468.9,613.1 Q465,614 462.4,611.3 L439.3,586.3 L404,543.7 L400.5,541.5 L401.9,538.7 L390.7,523.9Z" fill="#fde394" stroke="#17130a" stroke-width="1.5" stroke-linejoin="round"/><path d="M400.5,541.5 L403.7,538.2 L408,536.500 L468,607 L464,611.500Z" fill="#fbd97e"/><path d="M403.7,538.2 L408.500,536.200 L468.500,606.500" fill="none" stroke="#d4b055" stroke-width="1"/><path d="M390.700,523.900 L401.900,538.700" fill="none" stroke="#17130a" stroke-width="1.2"/><path d="M420,535 Q450,560 478,602" fill="none" stroke="#f5cf74" stroke-width="5" opacity=".35"/><path d="M476,492 Q505,522 538,556" fill="none" stroke="#fff0b8" stroke-width="7" opacity=".45"/><path d="M401.900,513.500 Q404,521 407.400,520.200 Q413,525 420.4,526.500 Q428,527.200 433.3,525.500 Q441,521 446.3,516 Q452,509 455.6,501.7 Q458,496 457.4,492.4 Q456,485 450,481.3" fill="none" stroke="#2a2210" stroke-width="1.1"/><path d="M407.4,516.5 Q412,514.500 416.7,514.6 Q423,513.500 429.6,511.9 Q435,508 438.9,503.5 Q444,498.500 448.1,494.3 Q450,490 449.1,486.9 L444.400,484.500 L450.900,489.600 Q453,495 451.9,500.7 Q451,506.500 448.1,510 Q444.500,510.500 441.7,512.8 Q438.500,516.500 435.2,519.3 Q431,522.500 426.9,523.9 Q423.500,521 420.4,520.2 Q415,521.500 409.3,521.1Z" fill="#5e4a27" stroke="#17130a" stroke-width="1.1" stroke-linejoin="round"/><path d="M410.500,518.500 Q418,517.500 424,517.500 Q431,516.500 436.500,512.500 Q442,507 446.500,503 Q450,498 450.200,491" fill="none" stroke="#84683a" stroke-width="1.7"/>
</svg>
</div>
<svg style="left:0px;top:0px" width="200" height="400" viewBox="0 0 200 400" ><rect x="124" y="75" width="32" height="66" rx="8" fill="#3c3c3c" fill-opacity=".78"/><rect x="124" y="147" width="32" height="95.5" rx="8" fill="#3c3c3c" fill-opacity=".78"/><rect x="124" y="250" width="32" height="125" rx="8" fill="#3c3c3c" fill-opacity=".78"/><g transform="translate(140 92.5)"><path d="M0,-8 L8,-4.5 L8,4 L0,8 L-8,4 L-8,-4.5Z" fill="#b8b8b8"/><path d="M0,-8 L8,-4.5 L0,-1 L-8,-4.5Z" fill="#cfcfcf"/><path d="M0,-1 L8,-4.5 L8,4 L0,8Z" fill="#9a9a9a"/><path d="M1,8 L8.5,4.5 L11,6 L4,9.5Z" fill="#111"/><circle cx="-9" cy="7" r="1.7" fill="#a8a8a8"/></g><path transform="translate(140 123.5) scale(1.0)" d="M-3.5,-8 Q0,-5 3.5,-8 L9.5,-4.5 L7,0 L5,-1 L5,8 L-5,8 L-5,-1 L-7,0 L-9.5,-4.5Z" fill="url(#gw)"/><rect x="135" y="126.5" width="10" height="2" fill="#bdbdbd"/><path d="M136.5,115.3 Q140,118.3 143.5,115.3" fill="none" stroke="#777" stroke-width="1" stroke-dasharray="1 1"/><rect x="141.2" y="120" width="3" height="3" fill="none" stroke="#666" stroke-width=".9"/><circle cx="132" cy="130" r="2.3" fill="#0a84ff"/><path transform="translate(140 165) scale(1.0)" d="M-3.5,-8 Q0,-5 3.5,-8 L9.5,-4.5 L7,0 L5,-1 L5,8 L-5,8 L-5,-1 L-7,0 L-9.5,-4.5Z" fill="url(#gw)"/><g transform="translate(140 194)"><circle cx="-5.5" cy="0.5" r="3.7" fill="#e6e6e6"/><path d="M-7,-0.5 h1.2 M-5,-0.5 h1.2 M-7,1.5 h1.2 M-5,1.5 h1.2" stroke="#666" stroke-width="1"/><path d="M-2,-4 L5,-8.5" stroke="#e0e0e0" stroke-width="1.6"/><path d="M5,-8.5 L8,-3" stroke="#ccc" stroke-width=".7"/><path d="M-1,3 L3,-1 H9 V9 H2 V5Z" fill="url(#gw)"/></g><g transform="translate(140 226)" fill="#7e7e7e"><circle cx="0" cy="-4.5" r="4.4"/><path d="M-9,8.5 Q-9,2 -3,1 H3 Q9,2 9,8.5Z"/></g><g transform="translate(139 267)"><path d="M-7,-3 L-2,-4 L-3,7 Q0,8.5 4,7 L4,3 L-5,5Z" fill="#d8d8d8"/><path d="M-3,-6 Q2,-8.500 7.300,-7.200 L5.600,3.600 Q0,2.500 -5.200,4.900Z" fill="url(#gb)"/></g><defs><linearGradient id="gdk" x1="0" y1="0" x2="1" y2="0.3"><stop offset="0" stop-color="#2a2a2e"/><stop offset=".6" stop-color="#8a8a90"/><stop offset="1" stop-color="#d0d0d4"/></linearGradient></defs><g transform="translate(139 297.5)"><path d="M-7,-3 L-2,-4 L-3,7 Q0,8.5 4,7 L4,3 L-5,5Z" fill="#4a4a4e"/><path d="M-3,-6 Q2,-8.5 7.3,-7.2 L5.6,3.6 Q0,2.5 -5.2,4.9Z" fill="url(#gdk)"/></g><g transform="translate(140 328)" fill="#9c8c84"><ellipse cx="0" cy="-3" rx="4.6" ry="5.6"/><path d="M-8,8.5 Q-7,3.5 -2.5,2.5 H2.5 Q7,3.5 8,8.5Z"/></g><g transform="translate(140 357.5)" fill="none" stroke="#f0f0f0" stroke-width="1"><circle r="8"/><ellipse rx="4" ry="8"/><path d="M-8,0 h16 M0,-8 v16 M-7,-4 h14 M-7,4 h14"/></g></svg>
<div class="title" style="left:804px;top:43px;width:763px"></div>
<div class="t" id="t20" style="left:1162px;top:47.8px;font-size:12.5px;color:#e4e4e4;letter-spacing:-0.488px;">2D 창</div>
<svg style="left:1553px;top:48px" width="12" height="10" viewBox="0 0 12 10" ><rect x="3.6" y="0.6" width="6.6" height="6.2" rx="1.3" fill="none" stroke="#bdbdbd" stroke-width="1.2"/><rect x="0.6" y="3.4" width="7" height="6.2" rx="1.3" fill="#1e1e21" stroke="#dcdcdc" stroke-width="1.2"/></svg>
<div class="abs" style="left:804px;top:63px;width:687px;height:943px;background:#c8c8c8;overflow:hidden;border:2px solid #e9ebf4">
<svg style="left:-2px;top:-2px" width="687" height="943" viewBox="804 63 687 943">
<g stroke="#bfbfbf" stroke-width="1"><line x1="810.5" y1="63" x2="810.5" y2="1006"/><line x1="833.9" y1="63" x2="833.9" y2="1006"/><line x1="857.3" y1="63" x2="857.3" y2="1006"/><line x1="880.7" y1="63" x2="880.7" y2="1006"/><line x1="904.2" y1="63" x2="904.2" y2="1006"/><line x1="927.6" y1="63" x2="927.6" y2="1006"/><line x1="951.0" y1="63" x2="951.0" y2="1006"/><line x1="974.4" y1="63" x2="974.4" y2="1006"/><line x1="997.8" y1="63" x2="997.8" y2="1006"/><line x1="1021.3" y1="63" x2="1021.3" y2="1006"/><line x1="1044.7" y1="63" x2="1044.7" y2="1006"/><line x1="1068.1" y1="63" x2="1068.1" y2="1006"/><line x1="1091.5" y1="63" x2="1091.5" y2="1006"/><line x1="1114.9" y1="63" x2="1114.9" y2="1006"/><line x1="1138.4" y1="63" x2="1138.4" y2="1006"/><line x1="1161.8" y1="63" x2="1161.8" y2="1006"/><line x1="1185.2" y1="63" x2="1185.2" y2="1006"/><line x1="1208.6" y1="63" x2="1208.6" y2="1006"/><line x1="1232.0" y1="63" x2="1232.0" y2="1006"/><line x1="1255.5" y1="63" x2="1255.5" y2="1006"/><line x1="1278.9" y1="63" x2="1278.9" y2="1006"/><line x1="1302.3" y1="63" x2="1302.3" y2="1006"/><line x1="1325.7" y1="63" x2="1325.7" y2="1006"/><line x1="1349.1" y1="63" x2="1349.1" y2="1006"/><line x1="1372.6" y1="63" x2="1372.6" y2="1006"/><line x1="1396.0" y1="63" x2="1396.0" y2="1006"/><line x1="1419.4" y1="63" x2="1419.4" y2="1006"/><line x1="1442.8" y1="63" x2="1442.8" y2="1006"/><line x1="1466.2" y1="63" x2="1466.2" y2="1006"/><line x1="1489.7" y1="63" x2="1489.7" y2="1006"/><line x1="804" y1="69.6" x2="1491" y2="69.6"/><line x1="804" y1="93.0" x2="1491" y2="93.0"/><line x1="804" y1="116.4" x2="1491" y2="116.4"/><line x1="804" y1="139.8" x2="1491" y2="139.8"/><line x1="804" y1="163.2" x2="1491" y2="163.2"/><line x1="804" y1="186.7" x2="1491" y2="186.7"/><line x1="804" y1="210.1" x2="1491" y2="210.1"/><line x1="804" y1="233.5" x2="1491" y2="233.5"/><line x1="804" y1="256.9" x2="1491" y2="256.9"/><line x1="804" y1="280.3" x2="1491" y2="280.3"/><line x1="804" y1="303.8" x2="1491" y2="303.8"/><line x1="804" y1="327.2" x2="1491" y2="327.2"/><line x1="804" y1="350.6" x2="1491" y2="350.6"/><line x1="804" y1="374.0" x2="1491" y2="374.0"/><line x1="804" y1="397.4" x2="1491" y2="397.4"/><line x1="804" y1="420.9" x2="1491" y2="420.9"/><line x1="804" y1="444.3" x2="1491" y2="444.3"/><line x1="804" y1="467.7" x2="1491" y2="467.7"/><line x1="804" y1="491.1" x2="1491" y2="491.1"/><line x1="804" y1="514.5" x2="1491" y2="514.5"/><line x1="804" y1="538.0" x2="1491" y2="538.0"/><line x1="804" y1="561.4" x2="1491" y2="561.4"/><line x1="804" y1="584.8" x2="1491" y2="584.8"/><line x1="804" y1="608.2" x2="1491" y2="608.2"/><line x1="804" y1="631.6" x2="1491" y2="631.6"/><line x1="804" y1="655.1" x2="1491" y2="655.1"/><line x1="804" y1="678.5" x2="1491" y2="678.5"/><line x1="804" y1="701.9" x2="1491" y2="701.9"/><line x1="804" y1="725.3" x2="1491" y2="725.3"/><line x1="804" y1="748.7" x2="1491" y2="748.7"/><line x1="804" y1="772.2" x2="1491" y2="772.2"/><line x1="804" y1="795.6" x2="1491" y2="795.6"/><line x1="804" y1="819.0" x2="1491" y2="819.0"/><line x1="804" y1="842.4" x2="1491" y2="842.4"/><line x1="804" y1="865.8" x2="1491" y2="865.8"/><line x1="804" y1="889.3" x2="1491" y2="889.3"/><line x1="804" y1="912.7" x2="1491" y2="912.7"/><line x1="804" y1="936.1" x2="1491" y2="936.1"/><line x1="804" y1="959.5" x2="1491" y2="959.5"/><line x1="804" y1="982.9" x2="1491" y2="982.9"/></g>
<line x1="1302.5" y1="63" x2="1302.5" y2="1006" stroke="#7d7d7d"/><line x1="804" y1="819.5" x2="1491" y2="819.5" stroke="#7d7d7d"/>
<g transform="translate(0 -262)"><path d="M1248.8,225.9 L1277.7,214.2 Q1283,234 1304.8,237.2 Q1326,234 1330.6,214.2 L1361.2,225.9 C1354.5,241 1353.5,262 1370,283.5 L1370,375.7 L1240.3,375.7 L1240.3,283.5 C1256.5,262 1255.5,241 1248.8,225.9Z" fill="#f8cf8a"/><path d="M1304.8,237.2 Q1283,234 1277.7,214.2 M1248.8,225.9 C1255.500,241 1256.500,262 1240.3,283.5 L1240.3,375.7 L1304.8,375.7" fill="none" stroke="#8e8e8e" stroke-width="2.5" stroke-linejoin="round"/><path d="M1304.8,237.2 Q1326,234 1330.6,214.2 M1361.2,225.9 C1354.500,241 1353.500,262 1370,283.5 L1370,375.7 L1304.8,375.7" fill="none" stroke="#2b2b2b" stroke-width="2.7" stroke-linejoin="round"/><path d="M1248.8,225.9 L1277.7,214.2" stroke="#8fe08f" stroke-width="2.8"/><path d="M1330.6,214.2 L1361.2,225.9" stroke="#2fb54a" stroke-width="3"/><line x1="1242" y1="283.5" x2="1369" y2="283.5" stroke="#7565d2" stroke-width="1.2" stroke-dasharray="1.4 1.6"/><line x1="1242" y1="296" x2="1369" y2="296" stroke="#7565d2" stroke-width="1.2" stroke-dasharray="1.4 1.6"/><line x1="1242" y1="371" x2="1369" y2="371" stroke="#7565d2" stroke-width="1.4" stroke-dasharray="1.4 1.6"/><line x1="1304.8" y1="238" x2="1304.8" y2="375.5" stroke="#8ab8ee" stroke-width="2"/><line x1="1304.8" y1="238" x2="1304.8" y2="375.5" stroke="#0a0a0a" stroke-width="2.400" stroke-dasharray="3.2 2.3"/></g><g transform="translate(0 -262)"><path d="M1410.3,227.8 L1440.8,215.2 Q1450,226.8 1467,226.8 Q1483,226.8 1492,219 L1492,376.3 L1403,376.3 L1403,284 C1419,263 1418,243 1410.3,227.8Z" fill="#f8cf8a"/><path d="M1467,226.8 Q1450,226.8 1440.8,215.2 L1410.3,227.8 C1418,243 1419,263 1403,284 L1403,376.3 L1467,376.3" fill="none" stroke="#8e8e8e" stroke-width="2.5" stroke-linejoin="round"/><path d="M1467,226.8 Q1483,226.8 1492,219 M1467,376.3 H1492" fill="none" stroke="#2b2b2b" stroke-width="2.7"/><line x1="1405" y1="284.5" x2="1491" y2="284.5" stroke="#7565d2" stroke-width="1.2" stroke-dasharray="1.4 1.6"/><line x1="1405" y1="297" x2="1491" y2="297" stroke="#7565d2" stroke-width="1.2" stroke-dasharray="1.4 1.6"/><line x1="1405" y1="372" x2="1491" y2="372" stroke="#7565d2" stroke-width="1.4" stroke-dasharray="1.4 1.6"/><line x1="1467" y1="227.5" x2="1467" y2="376" stroke="#8ab8ee" stroke-width="2"/><line x1="1467" y1="227.5" x2="1467" y2="376" stroke="#0a0a0a" stroke-width="2.400" stroke-dasharray="3.2 2.3"/></g><rect x="1218.800" y="185.3" width="122.800" height="3.700" fill="#f2a5a0" stroke="#38383a" stroke-width="2"/><g transform="translate(0 0)"><path d="M1248.8,225.9 L1277.7,214.2 Q1283,234 1304.8,237.2 Q1326,234 1330.6,214.2 L1361.2,225.9 C1354.5,241 1353.5,262 1370,283.5 L1370,375.7 L1240.3,375.7 L1240.3,283.5 C1256.5,262 1255.5,241 1248.8,225.9Z" fill="#f2a5a0"/><path d="M1304.8,237.2 Q1283,234 1277.7,214.2 M1248.8,225.9 C1255.500,241 1256.500,262 1240.3,283.5 L1240.3,375.7 L1304.8,375.7" fill="none" stroke="#8e8e8e" stroke-width="2.5" stroke-linejoin="round"/><path d="M1304.8,237.2 Q1326,234 1330.6,214.2 M1361.2,225.9 C1354.500,241 1353.500,262 1370,283.5 L1370,375.7 L1304.8,375.7" fill="none" stroke="#2b2b2b" stroke-width="2.7" stroke-linejoin="round"/><path d="M1248.8,225.9 L1277.7,214.2" stroke="#8fe08f" stroke-width="2.8"/><path d="M1330.6,214.2 L1361.2,225.9" stroke="#2fb54a" stroke-width="3"/><line x1="1242" y1="283.5" x2="1369" y2="283.5" stroke="#7565d2" stroke-width="1.2" stroke-dasharray="1.4 1.6"/><line x1="1242" y1="296" x2="1369" y2="296" stroke="#7565d2" stroke-width="1.2" stroke-dasharray="1.4 1.6"/><line x1="1242" y1="371" x2="1369" y2="371" stroke="#7565d2" stroke-width="1.4" stroke-dasharray="1.4 1.6"/><line x1="1304.8" y1="238" x2="1304.8" y2="375.5" stroke="#8ab8ee" stroke-width="2"/><line x1="1304.8" y1="238" x2="1304.8" y2="375.5" stroke="#0a0a0a" stroke-width="2.400" stroke-dasharray="3.2 2.3"/></g><g transform="translate(0 0)"><path d="M1410.3,227.8 L1440.8,215.2 Q1450,226.8 1467,226.8 Q1483,226.8 1492,219 L1492,376.3 L1403,376.3 L1403,284 C1419,263 1418,243 1410.3,227.8Z" fill="#f2a5a0"/><path d="M1467,226.8 Q1450,226.8 1440.8,215.2 L1410.3,227.8 C1418,243 1419,263 1403,284 L1403,376.3 L1467,376.3" fill="none" stroke="#8e8e8e" stroke-width="2.5" stroke-linejoin="round"/><path d="M1467,226.8 Q1483,226.8 1492,219 M1467,376.3 H1492" fill="none" stroke="#2b2b2b" stroke-width="2.7"/><line x1="1405" y1="284.5" x2="1491" y2="284.5" stroke="#7565d2" stroke-width="1.2" stroke-dasharray="1.4 1.6"/><line x1="1405" y1="297" x2="1491" y2="297" stroke="#7565d2" stroke-width="1.2" stroke-dasharray="1.4 1.6"/><line x1="1405" y1="372" x2="1491" y2="372" stroke="#7565d2" stroke-width="1.4" stroke-dasharray="1.4 1.6"/><line x1="1467" y1="227.5" x2="1467" y2="376" stroke="#8ab8ee" stroke-width="2"/><line x1="1467" y1="227.5" x2="1467" y2="376" stroke="#0a0a0a" stroke-width="2.400" stroke-dasharray="3.2 2.3"/></g><rect x="1218.800" y="444.3" width="122.800" height="3.700" fill="#5f4f74" stroke="#38383a" stroke-width="2"/><g transform="translate(0 259)"><path d="M1248.8,225.9 L1277.7,214.2 Q1283,234 1304.8,237.2 Q1326,234 1330.6,214.2 L1361.2,225.9 C1354.5,241 1353.5,262 1370,283.5 L1370,375.7 L1240.3,375.7 L1240.3,283.5 C1256.5,262 1255.5,241 1248.8,225.9Z" fill="#5f4f74"/><path d="M1304.8,237.2 Q1283,234 1277.7,214.2 M1248.8,225.9 C1255.500,241 1256.500,262 1240.3,283.5 L1240.3,375.7 L1304.8,375.7" fill="none" stroke="#8e8e8e" stroke-width="2.5" stroke-linejoin="round"/><path d="M1304.8,237.2 Q1326,234 1330.6,214.2 M1361.2,225.9 C1354.500,241 1353.500,262 1370,283.5 L1370,375.7 L1304.8,375.7" fill="none" stroke="#2b2b2b" stroke-width="2.7" stroke-linejoin="round"/><path d="M1248.8,225.9 L1277.7,214.2" stroke="#8fe08f" stroke-width="2.8"/><path d="M1330.6,214.2 L1361.2,225.9" stroke="#2fb54a" stroke-width="3"/><line x1="1242" y1="283.5" x2="1369" y2="283.5" stroke="#9383de" stroke-width="1.2" stroke-dasharray="1.4 1.6"/><line x1="1242" y1="296" x2="1369" y2="296" stroke="#9383de" stroke-width="1.2" stroke-dasharray="1.4 1.6"/><line x1="1242" y1="371" x2="1369" y2="371" stroke="#9383de" stroke-width="1.4" stroke-dasharray="1.4 1.6"/><line x1="1304.8" y1="238" x2="1304.8" y2="375.5" stroke="#8ab8ee" stroke-width="2"/><line x1="1304.8" y1="238" x2="1304.8" y2="375.5" stroke="#0a0a0a" stroke-width="2.400" stroke-dasharray="3.2 2.3"/></g><g transform="translate(0 259)"><path d="M1410.3,227.8 L1440.8,215.2 Q1450,226.8 1467,226.8 Q1483,226.8 1492,219 L1492,376.3 L1403,376.3 L1403,284 C1419,263 1418,243 1410.3,227.8Z" fill="#5f4f74"/><path d="M1467,226.8 Q1450,226.8 1440.8,215.2 L1410.3,227.8 C1418,243 1419,263 1403,284 L1403,376.3 L1467,376.3" fill="none" stroke="#8e8e8e" stroke-width="2.5" stroke-linejoin="round"/><path d="M1467,226.8 Q1483,226.8 1492,219 M1467,376.3 H1492" fill="none" stroke="#2b2b2b" stroke-width="2.7"/><line x1="1405" y1="284.5" x2="1491" y2="284.5" stroke="#9383de" stroke-width="1.2" stroke-dasharray="1.4 1.6"/><line x1="1405" y1="297" x2="1491" y2="297" stroke="#9383de" stroke-width="1.2" stroke-dasharray="1.4 1.6"/><line x1="1405" y1="372" x2="1491" y2="372" stroke="#9383de" stroke-width="1.4" stroke-dasharray="1.4 1.6"/><line x1="1467" y1="227.5" x2="1467" y2="376" stroke="#8ab8ee" stroke-width="2"/><line x1="1467" y1="227.5" x2="1467" y2="376" stroke="#0a0a0a" stroke-width="2.400" stroke-dasharray="3.2 2.3"/></g>
</svg></div>
<svg style="left:0px;top:0px" width="900" height="240" viewBox="0 0 900 240" ><rect x="816" y="73" width="32" height="156" rx="8" fill="#505050"/><path d="M822.5,99.5 L836,87 L837.5,88Z" fill="#e8e8e8" stroke="#e8e8e8" stroke-width=".8"/><path d="M835,88 Q840,88 840,93 Q840,96 842,96.5" fill="none" stroke="#3aa0f0" stroke-width="1.2"/><path transform="translate(832 123) scale(1.0)" d="M-3.5,-8 Q0,-5 3.5,-8 L9.5,-4.5 L7,0 L5,-1 L5,8 L-5,8 L-5,-1 L-7,0 L-9.5,-4.5Z" fill="url(#gw)"/><circle cx="832" cy="153" r="8.5" fill="url(#gw)"/><text x="832" y="158" font-family="Liberation Serif,serif" font-style="italic" font-weight="bold" font-size="14" fill="#1a6fe8" text-anchor="middle">i</text><g transform="translate(831 183)"><path d="M-7,-3 L-2,-4 L-3,7 Q0,8.5 4,7 L4,3 L-5,5Z" fill="#d8d8d8"/><path d="M-3,-6 Q2,-8.500 7.300,-7.200 L5.600,3.600 Q0,2.500 -5.200,4.900Z" fill="url(#gb)"/></g><path transform="translate(832 213) scale(1.0)" d="M-3.5,-8 Q0,-5 3.5,-8 L9.5,-4.5 L7,0 L5,-1 L5,8 L-5,8 L-5,-1 L-7,0 L-9.5,-4.5Z" fill="url(#gw)"/><rect x="824" y="214" width="5.5" height="5" fill="#2a8af0"/><path d="M825.2,214 v-1.5 a1.5,1.5 0 0 1 3,0 v1.5" fill="none" stroke="#2a8af0" stroke-width="1"/></svg>
<div class="tb" style="left:1491px;top:63px;width:76px;height:943px"></div>
<div class="abs" style="left:1529px;top:63px;width:1px;height:943px;background:#202023"></div>
<svg style="left:0px;top:0px" width="1580" height="1010" viewBox="0 0 1580 1010" ><rect x="1496" y="71" width="28" height="1" fill="#0b0b0c"/><rect x="1496" y="72" width="28" height="1" fill="#2e2e31"/><rect x="1496" y="407" width="28" height="1" fill="#0b0b0c"/><rect x="1496" y="408" width="28" height="1" fill="#2e2e31"/><rect x="1496" y="455" width="28" height="1" fill="#0b0b0c"/><rect x="1496" y="456" width="28" height="1" fill="#2e2e31"/><rect x="1496" y="534" width="28" height="1" fill="#0b0b0c"/><rect x="1496" y="535" width="28" height="1" fill="#2e2e31"/><rect x="1496" y="615" width="28" height="1" fill="#0b0b0c"/><rect x="1496" y="616" width="28" height="1" fill="#2e2e31"/><rect x="1496" y="663" width="28" height="1" fill="#0b0b0c"/><rect x="1496" y="664" width="28" height="1" fill="#2e2e31"/><rect x="1534" y="71" width="28" height="1" fill="#0b0b0c"/><rect x="1534" y="72" width="28" height="1" fill="#2e2e31"/><rect x="1534" y="214" width="28" height="1" fill="#0b0b0c"/><rect x="1534" y="215" width="28" height="1" fill="#2e2e31"/><rect x="1534" y="263" width="28" height="1" fill="#0b0b0c"/><rect x="1534" y="264" width="28" height="1" fill="#2e2e31"/><rect x="1534" y="311" width="28" height="1" fill="#0b0b0c"/><rect x="1534" y="312" width="28" height="1" fill="#2e2e31"/><rect x="1534" y="423" width="28" height="1" fill="#0b0b0c"/><rect x="1534" y="424" width="28" height="1" fill="#2e2e31"/><rect x="1534" y="502" width="28" height="1" fill="#0b0b0c"/><rect x="1534" y="503" width="28" height="1" fill="#2e2e31"/><rect x="1534" y="582" width="28" height="1" fill="#0b0b0c"/><rect x="1534" y="583" width="28" height="1" fill="#2e2e31"/><rect x="1534" y="630" width="28" height="1" fill="#0b0b0c"/><rect x="1534" y="631" width="28" height="1" fill="#2e2e31"/><rect x="1534" y="679" width="28" height="1" fill="#0b0b0c"/><rect x="1534" y="680" width="28" height="1" fill="#2e2e31"/><g transform="translate(1510 94)"><rect x="-16" y="-13.5" width="32" height="27" rx="3.5" fill="#111113" stroke="#050506"/><path d="M-11.4,-10.2 L-11.4,-2 L-5,-4.4Z" fill="#f4f4f4"/><path d="M-6,7.5 L10,-6 L10,7.5Z" fill="#2f6fc0"/><path d="M-6,7.5 L10,-6" stroke="#4a9af0" stroke-width="1.2"/></g><g transform="translate(1510 126)"><path d="M-11.4,-10.2 L-11.4,-2 L-5,-4.4Z" fill="#9a9a9e"/><path d="M-5.5,8 L9.5,-6 L9.5,8Z" fill="none" stroke="#d8d8d8" stroke-width="1.2"/><circle cx="-5.5" cy="8" r="1.7" fill="#ececec"/><circle cx="9.5" cy="-6" r="1.7" fill="#ececec"/><circle cx="9.5" cy="8" r="1.7" fill="#ececec"/><path d="M8.2,12.3 L14,7 L14,12.3Z" fill="#b0b0b0"/></g><g transform="translate(1510 158)"><path d="M-8,-8 H1 V8 H-8Z" fill="url(#gg)"/><path d="M1,-8 L10,0 L0,8" fill="none" stroke="#cfcfcf" stroke-width="1.6"/><circle cx="10" cy="0" r="1.7" fill="#ececec"/><circle cx="0" cy="8" r="1.7" fill="#ececec"/><path d="M8.2,12.3 L14,7 L14,12.3Z" fill="#b0b0b0"/></g><g transform="translate(1510 190)"><path d="M-10,-8 H0 Q1,0 10,-1 V8 H-10Z" fill="url(#gg)"/><path d="M8.2,12.3 L14,7 L14,12.3Z" fill="#b0b0b0"/></g><g transform="translate(1510 222)"><rect x="-10" y="-9" width="20" height="17" fill="url(#gg)"/><path d="M-7.5,-6 H2 L7,-2.5 V5 H-7.5Z" fill="#8a8a8a" stroke="#e0e0e0" stroke-width="1.2"/><path d="M8.2,12.3 L14,7 L14,12.3Z" fill="#b0b0b0"/></g><g transform="translate(1510 254)"><path d="M-10,-9 L-5,-8 L-3,-3 H3 L5,-8 L10,-9 L11,8 H-11Z" fill="url(#gg)"/><path d="M-3,-9 L3,-9 L2,-6 H-2Z" fill="#111"/><path d="M-3,-5 L3,-2 L-3,1 L3,4 L-3,7 M3,-5 L-3,-2 L3,1 L-3,4 L3,7" stroke="#e8e8e8" stroke-width="1.1" fill="none"/></g><g transform="translate(1510 286)"><rect x="-10" y="-9" width="20" height="17" fill="url(#gg)"/><path d="M-7.5,-6 H2 L7,-2.5 V5 H-7.5Z" fill="none" stroke="#f0f0f0" stroke-width="1.4" stroke-dasharray="1.5 1.6"/><path d="M8.2,12.3 L14,7 L14,12.3Z" fill="#b0b0b0"/></g><g transform="translate(1510 318)"><rect x="-11" y="-7" width="16" height="16" fill="url(#gg)"/><path d="M-8.5,1 H-2 V5 L-5.2,7.5 L-8.5,5Z" fill="#2a2a2c" stroke="#e0e0e0" stroke-width="1.1"/><path d="M0,-10 H11 V-3 L5.5,1.5 L0,-3Z" fill="url(#gw)"/></g><g transform="translate(1510 350)"><path d="M-11.4,-10.2 L-11.4,-2 L-5,-4.4Z" fill="#9a9a9e"/><path d="M-6,9 L10,-8 M2,1 L10,8" stroke="#8a8a8a" stroke-width="1.2"/><circle cx="2" cy="1" r="2" fill="#ececec"/></g><g transform="translate(1510 382)"><path d="M-11.4,-10.2 L-11.4,-2 L-5,-4.4Z" fill="#9a9a9e"/><path d="M2,-6 L4.5,-8.5 Q6.5,-5 9.5,-7.5 L11,-6 Q9,-1 11,1 V8 H-1 V-1Z" fill="none" stroke="#cfcfcf" stroke-width="1.5" stroke-linejoin="round"/></g><g transform="translate(1510 430)"><path d="M-9,-8.500 H0 Q2.200,-8 2.200,-5.500 V5.500 Q2.200,8 0,8.200 H-9Z" fill="url(#gg)"/><rect x="2.500" y="-6" width="7.500" height="11.500" fill="#8c8c90"/><path d="M2,-5.500 V5" stroke="#d8d8d8" stroke-width="1.3"/><circle cx="2" cy="-5.5" r="1.9" fill="#ececec"/><circle cx="2" cy="5" r="1.9" fill="#ececec"/></g><g transform="translate(1510 478)"><path d="M-11.4,-10.2 L-11.4,-2 L-5,-4.4Z" fill="#9a9a9e"/><path d="M0.5,-8 V8" stroke="#ddd" stroke-width="1.2"/><circle cx="0.5" cy="-8" r="1.4" fill="#ececec"/><circle cx="0.5" cy="8" r="1.4" fill="#ececec"/><g transform="translate(4 -8.5)"><rect width="8.500" height="17" fill="#3a3a3d"/><line x1="0" y1="1" x2="7" y2="1" stroke="#a4a4a8" stroke-width="1"/><line x1="0" y1="3" x2="7" y2="3" stroke="#a4a4a8" stroke-width="1"/><line x1="0" y1="5" x2="7" y2="5" stroke="#a4a4a8" stroke-width="1"/><line x1="0" y1="7" x2="7" y2="7" stroke="#a4a4a8" stroke-width="1"/><line x1="0" y1="9" x2="7" y2="9" stroke="#a4a4a8" stroke-width="1"/><line x1="0" y1="11" x2="7" y2="11" stroke="#a4a4a8" stroke-width="1"/><line x1="0" y1="13" x2="7" y2="13" stroke="#a4a4a8" stroke-width="1"/><line x1="0" y1="15" x2="7" y2="15" stroke="#a4a4a8" stroke-width="1"/><line x1="0" y1="17" x2="7" y2="17" stroke="#a4a4a8" stroke-width="1"/><rect x="7" width="1.5" height="17" fill="#a4a4a8"/></g></g><g transform="translate(1510 510)"><path d="M-10,-7 H10" stroke="#ddd" stroke-width="1.2"/><circle cx="-10" cy="-7" r="1.4" fill="#ececec"/><circle cx="10" cy="-7" r="1.4" fill="#ececec"/><rect x="-11" y="-3" width="22" height="8" fill="#3a3a3d"/><line x1="-10" y1="-3" x2="-10" y2="3.5" stroke="#a4a4a8" stroke-width="1"/><line x1="-8" y1="-3" x2="-8" y2="3.5" stroke="#a4a4a8" stroke-width="1"/><line x1="-6" y1="-3" x2="-6" y2="3.5" stroke="#a4a4a8" stroke-width="1"/><line x1="-4" y1="-3" x2="-4" y2="3.5" stroke="#a4a4a8" stroke-width="1"/><line x1="-2" y1="-3" x2="-2" y2="3.5" stroke="#a4a4a8" stroke-width="1"/><line x1="0" y1="-3" x2="0" y2="3.5" stroke="#a4a4a8" stroke-width="1"/><line x1="2" y1="-3" x2="2" y2="3.5" stroke="#a4a4a8" stroke-width="1"/><line x1="4" y1="-3" x2="4" y2="3.5" stroke="#a4a4a8" stroke-width="1"/><line x1="6" y1="-3" x2="6" y2="3.5" stroke="#a4a4a8" stroke-width="1"/><line x1="8" y1="-3" x2="8" y2="3.5" stroke="#a4a4a8" stroke-width="1"/><line x1="10" y1="-3" x2="10" y2="3.5" stroke="#a4a4a8" stroke-width="1"/><rect x="-11" y="3.5" width="22" height="1.5" fill="#a4a4a8"/></g><g transform="translate(1510 558)"><path d="M-11.4,-10.2 L-11.4,-2 L-5,-4.4Z" fill="#9a9a9e"/><text x="4" y="10" font-family="Liberation Serif,serif" font-size="24" fill="#dcdcdc" text-anchor="middle">A</text></g><g transform="translate(1510 590)"><text x="0" y="9" font-family="Liberation Serif,serif" font-size="27" fill="#dcdcdc" text-anchor="middle">A</text><path d="M8.2,12.3 L14,7 L14,12.3Z" fill="#b0b0b0"/></g><g transform="translate(1510 638)"><rect x="-11" y="-9" width="10.5" height="17" fill="#2c2c2e" stroke="#777" stroke-width="1"/><rect x="0.5" y="-9" width="10.5" height="17" fill="#2c2c2e" stroke="#777" stroke-width="1"/><path d="M-5.7,-8 V7 M5.7,-8 V7" stroke="#cfcfcf" stroke-width="1.2" stroke-dasharray="1.5 1.5"/><path d="M8.2,12.3 L14,7 L14,12.3Z" fill="#b0b0b0"/></g><g transform="translate(1510 686)"><path d="M-11.4,-10.2 L-11.4,-2 L-5,-4.4Z" fill="#9a9a9e"/><path d="M-5,-3 L-1,-6 L2,-4 L6,-7 L8,6 H-5Z" fill="url(#gg)"/><path d="M3,-8 Q1,-4 4,-1 Q6,2 4,6 M6,-8 Q4,-4 7,-1 Q9,2 7,6" stroke="#555" stroke-width="1.4" fill="none"/><path d="M-1,7 L9,-1" stroke="#eee" stroke-width="1.5"/><circle cx="-1" cy="7" r="1.4" fill="#ececec"/><circle cx="9" cy="-1" r="1.4" fill="#ececec"/><path d="M8.2,12.3 L14,7 L14,12.3Z" fill="#b0b0b0"/></g><g transform="translate(1510 718)"><circle cx="-4.5" cy="-8" r="2.6" fill="#6e6e6e"/><path d="M-10,8 Q-10,-3 -4.5,-4.5 Q1,-3 1,8Z" fill="#6a6a6a"/><path d="M-2,-1 L1,-4 L3,-2 L6,-5 L9,-2 V9 H-2Z" fill="url(#gw)"/></g><g transform="translate(1548 94)"><path d="M-11.4,-10.2 L-11.4,-2 L-5,-4.4Z" fill="#9a9a9e"/><g transform="translate(4.2 0)"><path d="M-7.4,-4.5 Q-7.4,-6.5 -5.4,-6.5 H2.4 V-8 H5.4 V-6.5 H6.4 Q7.4,-6.5 7.4,-5.5 V5.3 H0 V-1.3 H-3.7 V0.5 H-4.4 V3.9 H-5.9 V0.5 H-7.4Z" fill="url(#gg)"/></g><rect x="-3.2" y="6.6" width="15.4" height="1.8" fill="#88888c"/></g><g transform="translate(1548 126)"><g transform="translate(2.9 -2.2)"><path d="M-7.4,-4.5 Q-7.4,-6.5 -5.4,-6.5 H2.4 V-8 H5.4 V-6.5 H6.4 Q7.4,-6.5 7.4,-5.5 V5.3 H0 V-1.3 H-3.7 V0.5 H-4.4 V3.9 H-5.9 V0.5 H-7.4Z" fill="url(#gg)"/></g><path d="M-9,7 h14" stroke="#e8e8e8" stroke-width="1.4"/><circle cx="-9" cy="7" r="1.7" fill="#ececec"/><circle cx="5" cy="7" r="1.7" fill="#ececec"/><path d="M8.2,12.3 L14,7 L14,12.3Z" fill="#b0b0b0"/></g><g transform="translate(1548 158)"><g transform="translate(2.9 -2.2)"><path d="M-7.4,-4.5 Q-7.4,-6.5 -5.4,-6.5 H2.4 V-8 H5.4 V-6.5 H6.4 Q7.4,-6.5 7.4,-5.5 V5.3 H0 V-1.3 H-3.7 V0.5 H-4.4 V3.9 H-5.9 V0.5 H-7.4Z" fill="url(#gg)"/></g><path d="M-10,8 Q-6,5 -2.5,8 T5,8" stroke="#e0e0e0" stroke-width="1.4" fill="none"/><circle cx="-2.5" cy="8" r="1.7" fill="#ececec"/><path d="M8.2,12.3 L14,7 L14,12.3Z" fill="#b0b0b0"/></g><g transform="translate(1548 190)"><circle cx="-10" cy="-7.5" r="2" fill="none" stroke="#b0b0b0" stroke-width="1"/><path d="M-8.5,-6 l2,2" stroke="#b0b0b0" stroke-width="1"/><g transform="translate(4.2 0)"><path d="M-7.4,-4.5 Q-7.4,-6.5 -5.4,-6.5 H2.4 V-8 H5.4 V-6.5 H6.4 Q7.4,-6.5 7.4,-5.5 V5.3 H0 V-1.3 H-3.7 V0.5 H-4.4 V3.9 H-5.9 V0.5 H-7.4Z" fill="url(#gg)"/></g><rect x="-3.2" y="6.6" width="15.4" height="1.8" fill="#88888c"/></g><g transform="translate(1548 239)"><path d="M-9,3 Q-6,-6 4,-7 Q10,-7 10,3Z" fill="url(#gg)"/><path d="M-2,-4 Q3,-5 7,-3.5" stroke="#252528" stroke-width="1.6" fill="none"/><path d="M-10,5 h21 M-11,7.5 h23 M-12,10 h25" stroke="#6a6a6a" stroke-width="1.2"/></g><g transform="translate(1548 286)"><path d="M-11.4,-10.2 L-11.4,-2 L-5,-4.4Z" fill="#9a9a9e"/><path transform="translate(3.5 1) scale(0.82)" d="M-4,-9 Q0,-5.5 4,-9 L11.5,-4.5 L8.5,0.5 L6.5,-0.5 L6.5,9 L-6.5,9 L-6.5,-0.5 L-8.5,0.5 L-11.5,-4.5Z" fill="url(#gg)"/></g><g transform="translate(1548 333)"><path d="M-11.4,-10.2 L-11.4,-2 L-5,-4.4Z" fill="#9a9a9e"/><rect x="-4" y="-3" width="12" height="12" fill="url(#chk)"/><path d="M-2,6 L2,-7 Q8,-9.5 12,-6.5 L10,5 Q5,3 -2,6Z" fill="url(#gw)"/></g><g transform="translate(1548 366)"><path d="M-11.4,-10.2 L-11.4,-2 L-5,-4.4Z" fill="#9a9a9e"/><g transform="translate(3.5 1)"><path transform="translate(0 0) scale(0.82)" d="M-4,-9 Q0,-5.5 4,-9 L11.5,-4.5 L8.5,0.5 L6.5,-0.5 L6.5,9 L-6.5,9 L-6.5,-0.5 L-8.5,0.5 L-11.5,-4.5Z" fill="url(#gg)"/><rect x="-3.5" y="-2" width="7" height="9" fill="url(#chk)"/></g></g><g transform="translate(1548 398)"><path transform="translate(0 0) scale(1.05)" d="M-4,-9 Q0,-5.5 4,-9 L11.5,-4.5 L8.5,0.5 L6.5,-0.5 L6.5,9 L-6.5,9 L-6.5,-0.5 L-8.5,0.5 L-11.5,-4.5Z" fill="url(#gg)"/><rect x="-4.5" y="-2" width="9" height="11" fill="url(#chk)"/></g><g transform="translate(1548 446)"><path d="M-11.4,-10.2 L-11.4,-2 L-5,-4.4Z" fill="#9a9a9e"/><path d="M-4,9 L12,-7" stroke="#f0f0f0" stroke-width="1.6" stroke-dasharray="3.2 2"/></g><g transform="translate(1548 478)"><path d="M-11,-6 H11" stroke="#f0f0f0" stroke-width="1.8" stroke-dasharray="4 1.6"/><path d="M-10,1 H10" stroke="#cfcfcf" stroke-width="1.2"/><circle cx="-10" cy="1" r="1.4" fill="#ececec"/><circle cx="10" cy="1" r="1.4" fill="#ececec"/><path d="M8.2,12.3 L14,7 L14,12.3Z" fill="#b0b0b0"/></g><g transform="translate(1548 526)"><path d="M-11.4,-10.2 L-11.4,-2 L-5,-4.4Z" fill="#9a9a9e"/><path d="M-1,-8 Q6,-9 6,-6.5 Q6,-4.5 0,-4.5 Q-2,-3 6,-2.5 Q6,0 0,0 Q-2,1.5 6,2 Q6,4.5 0,4.5 Q-2,6 6,6.5" fill="none" stroke="#cfcfcf" stroke-width="1.4"/><path d="M10,-8 V8" stroke="#ddd" stroke-width="1.2"/><circle cx="10" cy="-8" r="1.4" fill="#ececec"/><circle cx="10" cy="8" r="1.4" fill="#ececec"/></g><g transform="translate(1548 558)"><path d="M-11,-2 V-7 Q-9.5,-9.5 -8,-7 V-3 Q-6.5,-0.5 -5,-3 V-7 Q-3.5,-9.5 -2,-7 V-3 Q-0.5,-0.5 1,-3 V-7 Q2.5,-9.5 4,-7 V-3 Q5.5,-0.5 7,-3 V-7 Q8.5,-9.5 10,-7 V-2" fill="none" stroke="#cfcfcf" stroke-width="1.3"/><path d="M-10,5 H10" stroke="#cfcfcf" stroke-width="1.2"/><circle cx="-10" cy="5" r="1.4" fill="#ececec"/><circle cx="10" cy="5" r="1.4" fill="#ececec"/><path d="M8.2,12.3 L14,7 L14,12.3Z" fill="#b0b0b0"/></g><g transform="translate(1548 606)"><path d="M-11,-3 L-8,-5 L-5,-3 L-3,-5 L-1,3 L-3,9 H-11Z" fill="#6a6a6a"/><path d="M2,-7 L5,-9 L8,-7 L10,-9 L11,4 H1Z" fill="url(#gg)"/><circle cx="0" cy="0" r="3.4" fill="#e8e8e8"/><path d="M-8,5 L8,-5" stroke="#e8e8e8" stroke-width="1.1"/><path d="M-1.8,0 h3.6 M0,-1.8 v3.6" stroke="#333" stroke-width="1"/></g><g transform="translate(1548 655)"><path d="M-3,-10.5 h6 v2 h-6z" fill="#9a9a9a"/><rect x="-9" y="-8.0" width="8" height="2.7" rx="1" fill="#b4b4b4"/><rect x="1" y="-8.0" width="8" height="2.7" rx="1" fill="#b4b4b4"/><rect x="-10" y="-4.3" width="9" height="2.7" rx="1" fill="#b4b4b4"/><rect x="1" y="-4.3" width="9" height="2.7" rx="1" fill="#b4b4b4"/><rect x="-10" y="-0.5999999999999996" width="9" height="2.7" rx="1" fill="#b4b4b4"/><rect x="1" y="-0.5999999999999996" width="9" height="2.7" rx="1" fill="#b4b4b4"/><rect x="-10" y="3.1000000000000014" width="9" height="2.7" rx="1" fill="#b4b4b4"/><rect x="1" y="3.1000000000000014" width="9" height="2.7" rx="1" fill="#b4b4b4"/><rect x="-10" y="6.800000000000001" width="9" height="2.7" rx="1" fill="#b4b4b4"/><rect x="1" y="6.800000000000001" width="9" height="2.7" rx="1" fill="#b4b4b4"/></g></svg>
<div class="abs" style="left:1572px;top:43px;width:342px;height:530px;background:#252528"></div>
<div class="title" style="left:1572px;top:43px;width:342px"></div>
<div class="t" id="t21" style="left:1726.8px;top:47.8px;font-size:12px;color:#e4e4e4;letter-spacing:-0.375px;">속성창</div>
<svg style="left:1575px;top:48px" width="12" height="10" viewBox="0 0 12 10" ><path d="M0.8,5 H8 M5.2,2 L8.3,5 L5.2,8" stroke="#eee" stroke-width="1.6" fill="none"/><line x1="11.5" y1="0.3" x2="11.5" y2="9.700" stroke="#3c3c3f"/></svg>
<svg style="left:1900px;top:48px" width="12" height="10" viewBox="0 0 12 10" ><rect x="3.6" y="0.6" width="6.6" height="6.2" rx="1.3" fill="none" stroke="#bdbdbd" stroke-width="1.2"/><rect x="0.6" y="3.4" width="7" height="6.2" rx="1.3" fill="#1e1e21" stroke="#dcdcdc" stroke-width="1.2"/></svg>
<div class="abs" style="left:1572px;top:578px;width:342px;height:428px;background:#252528"></div>
<div class="title" style="left:1572px;top:578px;width:342px"></div>
<div class="t" id="t22" style="left:1726.5px;top:582.8px;font-size:12px;color:#e4e4e4;letter-spacing:-0.308px;">물체창</div>
<svg style="left:1575px;top:583px" width="12" height="10" viewBox="0 0 12 10" ><path d="M0.8,5 H8 M5.2,2 L8.3,5 L5.2,8" stroke="#eee" stroke-width="1.6" fill="none"/><line x1="11.5" y1="0.3" x2="11.5" y2="9.700" stroke="#3c3c3f"/></svg>
<svg style="left:1900px;top:583px" width="12" height="10" viewBox="0 0 12 10" ><rect x="3.6" y="0.6" width="6.6" height="6.2" rx="1.3" fill="none" stroke="#bdbdbd" stroke-width="1.2"/><rect x="0.6" y="3.4" width="7" height="6.2" rx="1.3" fill="#1e1e21" stroke="#dcdcdc" stroke-width="1.2"/></svg>
<div class="abs" style="left:0;top:0;width:1920px;height:1006px;overflow:hidden"><svg style="left:0px;top:0px" width="1920" height="1006" viewBox="0 0 1920 1006" ><g fill="#f2f2f2"><rect x="1582" y="603" width="3" height="2.6"/><rect x="1586.5" y="603" width="10.5" height="2.6"/><rect x="1582" y="607.2" width="3" height="2.6"/><rect x="1586.5" y="607.2" width="10.5" height="2.6"/><rect x="1582" y="611.4" width="3" height="2.6"/><rect x="1586.5" y="611.4" width="10.5" height="2.6"/><rect x="1582" y="615.6" width="3" height="2.6"/><rect x="1586.5" y="615.6" width="10.5" height="2.6"/></g><g transform="translate(1621 610)"><path d="M-7,-3 L-2,-4 L-3,7 Q0,8.5 4,7 L4,3 L-5,5Z" fill="#2f5f9a"/><path d="M-2.5,-7 Q3,-9 8.5,-7.5 L6,5 Q1,3.5 -5,5.5Z" fill="#5aa8ee"/></g><rect x="1646" y="602" width="16" height="16" fill="#fff"/><rect x="1647.2" y="603.2" width="3.4" height="3.4" fill="#111"/><rect x="1647.2" y="610.0" width="3.4" height="3.4" fill="#111"/><rect x="1650.6000000000001" y="606.6" width="3.4" height="3.4" fill="#111"/><rect x="1650.6000000000001" y="613.4000000000001" width="3.4" height="3.4" fill="#111"/><rect x="1654.0" y="603.2" width="3.4" height="3.4" fill="#111"/><rect x="1654.0" y="610.0" width="3.4" height="3.4" fill="#111"/><rect x="1657.4" y="606.6" width="3.4" height="3.4" fill="#111"/><rect x="1657.4" y="613.4000000000001" width="3.4" height="3.4" fill="#111"/><circle cx="1686" cy="610" r="8" fill="#f2f2f2"/><circle cx="1683.4" cy="607.4" r="1.4" fill="#252528"/><circle cx="1683.4" cy="612.6" r="1.4" fill="#252528"/><circle cx="1688.6" cy="607.4" r="1.4" fill="#252528"/><circle cx="1688.6" cy="612.6" r="1.4" fill="#252528"/><circle cx="1711.5" cy="610" r="2.5" fill="#f2f2f2"/><path d="M1711,610 h15" stroke="#f2f2f2" stroke-width="1.8"/><path d="M1742.5,617.5 L1757.5,602.5" stroke="#f2f2f2" stroke-width="2" stroke-dasharray="4 2.4"/><path transform="translate(1782 610.2) rotate(-32)" d="M-8.500,4.500 C-10.500,1 -8.500,-4.500 -6.500,-1 C-5,2 -4.500,5 -3.500,1 C-2.500,-3 -1.500,-5 -0.500,-1 C0.500,2 1,5 2,1 C3,-3 4,-5 5,-1 C6,2 7,4 9,3.500" fill="none" stroke="#f2f2f2" stroke-width="1.7" stroke-linecap="round"/><g transform="translate(1813.800 609.8)"><path d="M-2.100,-5.400 L-7.900,-7.600 V0.900 L-2.100,-1.200Z M2.100,-5.400 L7.900,-7.600 V0.900 L2.100,-1.200Z" fill="#f2f2f2"/><rect x="-2.100" y="-7" width="4.200" height="7.400" fill="#f2f2f2"/><path d="M-6,-5 l2.300,1.700 -2.300,1.700 M6,-5 l-2.300,1.700 2.300,1.700 M-0.700,-6.500 v6.400 M0.700,-6.500 v6.400" fill="none" stroke="#252528" stroke-width=".9"/><path d="M-2.300,1.200 L-5.900,8 L-3.800,7 L-2.800,8.200 L-0.400,1.400Z M2.300,1.200 L5.900,8 L3.800,7 L2.800,8.200 L0.400,1.400Z" fill="#b4b4b4"/></g><g transform="translate(1846 610)"><path d="M-4.5,-8 H4.5 L5.5,-2 H-5.5Z" fill="#f2f2f2"/><rect x="-3.6" y="-6" width="7.2" height="14" rx="3.4" fill="#252528" stroke="#f2f2f2" stroke-width="1.5"/><rect x="-1.3" y="-5" width="2.6" height="7" rx="1.2" fill="#f2f2f2"/><path d="M-2,5 h4" stroke="#f2f2f2" stroke-width="1.3"/></g><g transform="translate(1876.700 610)"><path d="M-4.700,8 V-0.800 L-0.500,-4.200 H3.600 V8Z" fill="#f2f2f2"/><path d="M4.600,8 V0.500 Q4.600,-2.500 6,-3.500 V-7 H9 V-3.500 Q10,-2.500 10,0.500 V8" fill="none" stroke="#f2f2f2" stroke-width="1.2"/><path d="M5.500,-8 h4" stroke="#f2f2f2" stroke-width="1"/></g><rect x="1883.5" y="598" width="30.5" height="31" fill="#2a2a2d"/><path d="M1888.5,613 l5,-3.5 v7z" fill="#47474a"/><path d="M1902,609.5 l5.5,3.5 -5.5,3.5z" fill="#f2f2f2"/><rect x="1572" y="627" width="311" height="1.6" fill="#3a3a3d"/><rect x="1604" y="626.6" width="34" height="2" fill="#5aaef0"/><g fill="none" stroke="#1f9df0" stroke-width="2.1" transform="translate(1591 657.8) scale(0.62)"><path d="M-2.8,2.200 V-7.200 A3.1,3.1 0 0 1 3.4,-7.200 V-5" stroke="#14d890" stroke-linecap="round" transform="rotate(0)"/><path d="M-2.8,2.200 V-7.200 A3.1,3.1 0 0 1 3.4,-7.200 V-5" stroke="#1f9df0" stroke-linecap="round" transform="rotate(120)"/><path d="M-2.8,2.200 V-7.200 A3.1,3.1 0 0 1 3.4,-7.200 V-5" stroke="#1f9df0" stroke-linecap="round" transform="rotate(240)"/></g><g transform="translate(1824 657.5)"><path d="M-6,-4.5 h4 l1.5,1.5 H6 V5 H-6Z" fill="#e0e0e0"/><path d="M-6,-6 h3.5 l1,1 h-4.5z" fill="#e0e0e0"/><path d="M2.5,-6.5 v6 M-0.5,-3.5 h6" stroke="#252528" stroke-width="2.6"/><path d="M2.5,-6 v5 M0,-3.5 h5" stroke="#f0f0f0" stroke-width="1.3"/></g><line x1="1835.5" y1="644" x2="1835.5" y2="670" stroke="#2e2e31"/><g transform="translate(1848.5 656.5)"><path d="M-5.5,4 Q-5.5,-5 0,-5 Q5.5,-5 5.5,4 L3,2.5 L1.5,4.5 L0,2 L-1.5,4.5 L-3,2.5Z" fill="#cfcfcf"/><path d="M0,-4 V2 M-2.5,-3 L-3,2 M2.5,-3 L3,2" stroke="#8a8a8a" stroke-width=".8"/></g><rect x="1582" y="677" width="323" height="20" fill="#1c1c1f"/><path d="M1593.800,685.2 h6.400 l-3.200,4.300z" fill="#f2f2f2"/><rect x="1582" y="829" width="323" height="20" fill="#1c1c1f"/><path d="M1593.800,837.2 h6.400 l-3.200,4.300z" fill="#f2f2f2"/><g transform="translate(1762 687)"><path d="M-4.5,2.5 L2.5,-4.5 L5,-2 L-2,5Z" fill="#f2f2f2"/><path d="M-5.5,3.5 L-3,6 L-6.5,6.8Z" fill="#f2f2f2"/></g><path d="M1848,687 h10 M1853,682 v10" stroke="#f2f2f2" stroke-width="1.7"/><g transform="translate(1873 687)"><path d="M-5.5,-5 h4 l1.2,1.5 h5.3 v2 h-10.5z" fill="#f2f2f2"/><path d="M-5.8,-1 h11.6 l-.8,6.2 h-10z" fill="#f2f2f2"/></g><g transform="translate(1752 839)"><path d="M-4.5,2.5 L2.5,-4.5 L5,-2 L-2,5Z" fill="#f2f2f2"/><path d="M-5.5,3.5 L-3,6 L-6.5,6.8Z" fill="#f2f2f2"/></g><path d="M1828,839 h10 M1833,834 v10" stroke="#f2f2f2" stroke-width="1.7"/><g transform="translate(1853 839)"><path d="M-5.5,-5 h4 l1.2,1.5 h5.3 v2 h-10.5z" fill="#f2f2f2"/><path d="M-5.8,-1 h11.6 l-.8,6.2 h-10z" fill="#f2f2f2"/></g><g transform="translate(1873 839)"><path d="M-4,-2.5 L-3,5.2 H3 L4,-2.5" fill="none" stroke="#f2f2f2" stroke-width="1.3"/><path d="M-5.5,-3.5 L4.5,-5.5" stroke="#f2f2f2" stroke-width="1.3"/><rect x="-2" y="-0.5" width="4" height="3.2" fill="#f2f2f2"/></g><rect x="1605" y="701" width="37" height="37" fill="#f8cf8a"/><g fill="#f2f2f2"><rect x="1874.8" y="718.1" width="1.9" height="1.9"/><rect x="1878" y="718.1" width="1.9" height="1.9"/><rect x="1881.2" y="718.1" width="1.9" height="1.9"/></g><rect x="1587" y="740.6" width="300" height="1" fill="#2f2f32"/><path d="M1587.5,719.5 l3,3.5 6,-7" fill="none" stroke="#4aa3f0" stroke-width="2"/><rect x="1605" y="745" width="37" height="37" fill="#f2a5a0"/><g fill="#f2f2f2"><rect x="1874.8" y="762.1" width="1.9" height="1.9"/><rect x="1878" y="762.1" width="1.9" height="1.9"/><rect x="1881.2" y="762.1" width="1.9" height="1.9"/></g><rect x="1587" y="784.6" width="300" height="1" fill="#2f2f32"/><rect x="1605" y="789" width="37" height="37" fill="#5f4f74"/><g fill="#f2f2f2"><rect x="1874.8" y="806.1" width="1.9" height="1.9"/><rect x="1878" y="806.1" width="1.9" height="1.9"/><rect x="1881.2" y="806.1" width="1.9" height="1.9"/></g><rect x="1587" y="828.6" width="300" height="1" fill="#2f2f32"/><rect x="1605" y="853" width="37" height="37" fill="#b90b0b"/><g fill="#f2f2f2"><rect x="1874.8" y="870.1" width="1.9" height="1.9"/><rect x="1878" y="870.1" width="1.9" height="1.9"/><rect x="1881.2" y="870.1" width="1.9" height="1.9"/></g><g transform="translate(1859 871)"><path d="M-4,-2.5 L-3,5.2 H3 L4,-2.5" fill="none" stroke="#f2f2f2" stroke-width="1.3"/><path d="M-5.5,-3.5 L4.5,-5.5" stroke="#f2f2f2" stroke-width="1.3"/><rect x="-2" y="-0.5" width="4" height="3.2" fill="#f2f2f2"/></g><rect x="1587" y="892.6" width="300" height="1" fill="#2f2f32"/><rect x="1605" y="897" width="37" height="37" fill="#e2560a"/><g fill="#f2f2f2"><rect x="1874.8" y="914.1" width="1.9" height="1.9"/><rect x="1878" y="914.1" width="1.9" height="1.9"/><rect x="1881.2" y="914.1" width="1.9" height="1.9"/></g><g transform="translate(1859 915)"><path d="M-4,-2.5 L-3,5.2 H3 L4,-2.5" fill="none" stroke="#f2f2f2" stroke-width="1.3"/><path d="M-5.5,-3.5 L4.5,-5.5" stroke="#f2f2f2" stroke-width="1.3"/><rect x="-2" y="-0.5" width="4" height="3.2" fill="#f2f2f2"/></g><rect x="1587" y="936.6" width="300" height="1" fill="#2f2f32"/><rect x="1605" y="941" width="37" height="37" fill="#ecb50e"/><g fill="#f2f2f2"><rect x="1874.8" y="958.1" width="1.9" height="1.9"/><rect x="1878" y="958.1" width="1.9" height="1.9"/><rect x="1881.2" y="958.1" width="1.9" height="1.9"/></g><g transform="translate(1859 959)"><path d="M-4,-2.5 L-3,5.2 H3 L4,-2.5" fill="none" stroke="#f2f2f2" stroke-width="1.3"/><path d="M-5.5,-3.5 L4.5,-5.5" stroke="#f2f2f2" stroke-width="1.3"/><rect x="-2" y="-0.5" width="4" height="3.2" fill="#f2f2f2"/></g><rect x="1587" y="980.6" width="300" height="1" fill="#2f2f32"/><rect x="1605" y="985" width="37" height="37" fill="#1f4848"/><g fill="#f2f2f2"><rect x="1874.8" y="1002.1" width="1.9" height="1.9"/><rect x="1878" y="1002.1" width="1.9" height="1.9"/><rect x="1881.2" y="1002.1" width="1.9" height="1.9"/></g><g transform="translate(1859 1003)"><path d="M-4,-2.5 L-3,5.2 H3 L4,-2.5" fill="none" stroke="#f2f2f2" stroke-width="1.3"/><path d="M-5.5,-3.5 L4.5,-5.5" stroke="#f2f2f2" stroke-width="1.3"/><rect x="-2" y="-0.5" width="4" height="3.2" fill="#f2f2f2"/></g><rect x="1587" y="1024.6" width="300" height="1" fill="#2f2f32"/><rect x="1905" y="677" width="9" height="329" fill="#1f1f22"/><rect x="1906.5" y="679" width="6" height="235" rx="3" fill="#58585b"/></svg><div class="t" id="t23" style="left:1859.3px;top:652.3px;font-size:12.5px;color:#e8e8e8;letter-spacing:-0.771px;">CLOFAB</div><div class="t" id="t24" style="left:1697.4px;top:681.3px;font-size:13px;color:#e8e8e8;letter-spacing:0.031px;">Primary</div><div class="t" id="t25" style="left:1687.4px;top:833.3px;font-size:13px;color:#e8e8e8;letter-spacing:0.031px;">Primary</div><div class="t" id="t26" style="left:1650.4px;top:714.5px;font-size:12.5px;color:#ececec;letter-spacing:0.184px;">Knit_Cotton_Jersey</div><div class="t" id="t27" style="left:1650.4px;top:758.5px;font-size:12.5px;color:#ececec;letter-spacing:0.026px;">Knit_Cotton_Jersey 복사 1</div><div class="t" id="t28" style="left:1650.4px;top:802.5px;font-size:12.5px;color:#ececec;letter-spacing:0.026px;">Knit_Cotton_Jersey 복사 2</div><div class="t" id="t29" style="left:1650.4px;top:866.7px;font-size:12px;color:#525255;letter-spacing:-0.247px;">정면</div><div class="t" id="t30" style="left:1650.4px;top:910.7px;font-size:12px;color:#525255;letter-spacing:-0.442px;">우측면</div><div class="t" id="t31" style="left:1650.4px;top:954.7px;font-size:12px;color:#525255;letter-spacing:-0.442px;">좌측면</div><div class="t" id="t32" style="left:1650.4px;top:998.7px;font-size:12px;color:#525255;letter-spacing:-0.247px;">후면</div></div>
<div class="abs" style="left:0;top:1006px;width:1920px;height:33px;background:#18181b"></div>
<div class="t" id="t33" style="left:16.3px;top:1016px;font-size:12px;color:#dcdcdc;letter-spacing:-0.534px;">Version: 2025.2.236 (r57278)</div>
<svg style="left:0px;top:0px" width="1920" height="1040" viewBox="0 0 1920 1040" ><rect x="1811.5" y="1017.5" width="12" height="9" rx="1" fill="none" stroke="#9a9a9a" stroke-width="1.2"/><path d="M1817.5,1017.5 v9" stroke="#9a9a9a" stroke-width="1.2"/><rect x="1835" y="1017" width="14" height="10" rx="1.5" fill="#e8e8e8"/><rect x="1859" y="1017" width="14" height="10" rx="1.5" fill="#e8e8e8"/><text x="1842" y="1025.3" font-size="8.5" font-weight="bold" fill="#18181b" text-anchor="middle" font-family="Liberation Sans,sans-serif">3D</text><text x="1866" y="1025.3" font-size="8.5" font-weight="bold" fill="#18181b" text-anchor="middle" font-family="Liberation Sans,sans-serif">2D</text><line x1="1879.5" y1="1012" x2="1879.5" y2="1032" stroke="#2a2a2d"/><path d="M1897,1019 A5,5 0 1 0 1897.6,1024" fill="none" stroke="#e8e8e8" stroke-width="1.5"/><path d="M1898.5,1015.5 v4.5 h-4.5z" fill="#e8e8e8"/></svg>
<div class="abs" style="left:0;top:1039px;width:1920px;height:1px;background:#1f9cec"></div>
<div class="abs" style="left:0;top:1040px;width:1920px;height:40px;background:#d4e6ef"></div>
<svg style="left:0px;top:0px" width="1920" height="1080" viewBox="0 0 1920 1080" ><g fill="#0a0a0a"><path d="M15.6,1054 L22.6,1053 V1059.2 H15.6Z M23.6,1052.9 L32.2,1051.6 V1059.2 H23.6Z M15.6,1060.2 H22.6 V1066.5 L15.6,1065.5Z M23.6,1060.2 H32.2 V1067.9 L23.6,1066.6Z"/></g><circle cx="74" cy="1057.5" r="8" fill="none" stroke="#0a0a0a" stroke-width="2"/><path d="M68.5,1063.5 L61.5,1070" stroke="#0a0a0a" stroke-width="2.4"/><g fill="none" stroke="#0a0a0a" stroke-width="1.4"><rect x="113.5" y="1056" width="9" height="7.5"/><path d="M111.7,1052.5 v2 M111.7,1052.7 h12.5 M124.2,1052.5 v2 M111.7,1067 v-2 M111.7,1066.8 h12.5 M124.2,1067 v-2 M127.3,1052 v3.5 M127.3,1061.5 v5.5"/></g><rect x="125.8" y="1056.5" width="3" height="3" fill="#0a0a0a"/><defs><linearGradient id="edg" x1="0" y1="0" x2="1" y2="0"><stop offset="0" stop-color="#1a8fd8"/><stop offset="1" stop-color="#4cd964"/></linearGradient></defs><circle cx="170.6" cy="1059.8" r="12" fill="#1474c4"/><path d="M158.8,1058 A12,12 0 0 1 182.5,1058 Q182,1064 175,1064 Q171,1063.5 172.5,1060 Q173,1056 168,1055.5 Q162,1056 158.8,1058Z" fill="url(#edg)"/><path d="M166,1062 Q166,1057.5 170,1057 Q173,1057.5 172.3,1060 Q171,1064 176,1064 Q180,1064 181.5,1062.5 Q178,1070 171,1069.5 Q166,1068 166,1062Z" fill="#d4e6ef"/><path d="M162,1060 Q160,1069 170,1071.5 Q164,1066 166,1059.5Z" fill="#0c59a4"/><rect x="392" y="1040" width="48" height="40" fill="#e9f3f8"/><rect x="200" y="1078" width="40" height="2" fill="#0a74d4"/><rect x="249" y="1078" width="40" height="2" fill="#0a74d4"/><rect x="392" y="1078" width="48" height="2" fill="#0a74d4"/><path d="M209,1052 h8 l1.5,1.5 h-9.5z" fill="#e8a800"/><rect x="209" y="1053" width="21" height="15" rx="1" fill="#ffd75e"/><path d="M213.5,1068 v-6.5 h12 v6.5 h-3 v-3.5 h-6 v3.5z" fill="#2f8de4"/><g transform="translate(269 1059)"><path d="M-6,-9 L8,-9 L6,9 L-10,7Z" fill="#e8eef2" stroke="#9aa8b0" stroke-width=".8"/><path d="M-5,-7 L6.5,-7 L5,6 L-8,5Z" fill="#8fd0ea"/><path d="M6,9 L8,-9 L11,-7 L9,9.5Z" fill="#c8ccd0"/><path d="M-6,-9.5 h14" stroke="#888" stroke-width="1.5" stroke-dasharray="1 1"/></g><g transform="translate(319 1059)"><ellipse cx="-2" cy="-3" rx="10" ry="6.5" fill="#f4f4f4" stroke="#e03030" stroke-width="1.4" transform="rotate(-12)"/><path d="M-4,-6 L4,6 M4,-6 L-2,5" stroke="#8a8a8a" stroke-width="1.3"/><circle cx="5" cy="8" r="2.6" fill="none" stroke="#1a6fd0" stroke-width="1.5"/><circle cx="-1" cy="8.5" r="2.6" fill="none" stroke="#1a6fd0" stroke-width="1.5"/></g><g transform="translate(367 1059.5)"><rect x="-9" y="-11" width="18" height="22" rx="1" fill="#3c3c3c"/><rect x="-6.5" y="-8.5" width="13" height="4.5" fill="#d4e6ef"/><rect x="-6.5" y="-2.0" width="3.4" height="2.8" fill="#d4e6ef"/><rect x="-6.5" y="2.2" width="3.4" height="2.8" fill="#d4e6ef"/><rect x="-6.5" y="6.4" width="3.4" height="2.8" fill="#d4e6ef"/><rect x="-1.7999999999999998" y="-2.0" width="3.4" height="2.8" fill="#d4e6ef"/><rect x="-1.7999999999999998" y="2.2" width="3.4" height="2.8" fill="#d4e6ef"/><rect x="-1.7999999999999998" y="6.4" width="3.4" height="2.8" fill="#d4e6ef"/><rect x="2.9000000000000004" y="-2.0" width="3.4" height="2.8" fill="#d4e6ef"/><rect x="2.9000000000000004" y="2.2" width="3.4" height="2.8" fill="#d4e6ef"/><rect x="2.9000000000000004" y="6.4" width="3.4" height="2.8" fill="#d4e6ef"/></g><g transform="translate(415.5 1059.5)"><path d="M0,-11.5 L10,-5.8 V5.8 L0,11.5 L-10,5.8 V-5.8Z" fill="#1e8cf0"/><circle r="5.2" fill="none" stroke="#fff" stroke-width="3.2" stroke-dasharray="6.5 1.6" transform="rotate(50)"/><rect x="2" y="-2.6" width="6" height="5.2" fill="#1e8cf0"/></g><g fill="none" stroke="#0a0a0a" stroke-width="1.1"><rect x="1629.5" y="1055.5" width="6" height="11" rx="1"/><rect x="1630.5" y="1052" width="4" height="3.5"/><path d="M1636,1066 l2,2 3.5,-4"/></g><path d="M1656.5,1052 L1663.5,1054 V1060 Q1663,1065.5 1656.5,1068 Q1650,1065.5 1649.5,1060 V1054Z" fill="#fff" stroke="#0a0a0a" stroke-width="1.3"/><path d="M1656.5,1052 V1068 M1649.5,1060 h14" stroke="#0a0a0a" stroke-width="1"/><circle cx="1660.7" cy="1065" r="3.6" fill="#19a34a"/><path d="M1658.8,1065 l1.4,1.5 2.4,-3" stroke="#fff" stroke-width="1" fill="none"/><g fill="none" stroke="#0a0a0a" stroke-width="1.2"><path d="M1677,1068 A9,9 0 0 1 1686,1057"/><path d="M1680,1068 A6,6 0 0 1 1687,1061"/><path d="M1683,1068 A3,3 0 0 1 1687.5,1064.5"/></g><circle cx="1687.3" cy="1067.3" r="1.3" fill="#0a0a0a"/><rect x="1697" y="1052" width="16" height="16" fill="#1a1a1a"/><path d="M1700,1060 Q1705,1054.5 1710.5,1060 Q1705,1065.5 1700,1060Z" fill="none" stroke="#76b900" stroke-width="1.2"/><circle cx="1705" cy="1060" r="1.8" fill="none" stroke="#76b900" stroke-width="1"/><path d="M1721.5,1057.5 h2.5 l3.5,-3.5 v12 l-3.5,-3.5 h-2.5z" fill="none" stroke="#0a0a0a" stroke-width="1.1"/><path d="M1730,1057.5 l4.5,4.5 M1734.500,1057.5 l-4.5,4.5" stroke="#0a0a0a" stroke-width="1.1"/><g transform="translate(1752 1060)"><path d="M-6,-1 L-2,-6 L7,3 L1,7Z" fill="#3a3a3a"/><ellipse cx="3.5" cy="4.5" rx="5.5" ry="3" transform="rotate(40 3.5 4.5)" fill="#9a9a9a"/><circle cx="-4.5" cy="1.5" r="3" fill="#c8b89a"/><path d="M-6,8 h9" stroke="#8a8a8a" stroke-width="1.2"/></g><path d="M1880,1053 h15.500 v11 h-11 l-4.500,4z" fill="#0a0a0a"/><path d="M1882.500,1056 h10.500 M1882.500,1058.500 h10.500 M1882.500,1061 h10.500" stroke="#d4e6ef" stroke-width=".9"/><circle cx="1894.3" cy="1067.6" r="6.6" fill="#d0d0d0" stroke="#5a5a5a" stroke-width="1"/><text x="1894.3" y="1071.5" font-size="10.500" fill="#111" text-anchor="middle" font-family="Liberation Sans,sans-serif">1</text><line x1="1915.5" y1="1040" x2="1915.5" y2="1080" stroke="#9ab0bc"/></svg><div class="t" style="left:1768px;top:1050.5px;font-size:19px;color:#0a0a0a">A</div><div class="t" id="t34" style="left:1798px;top:1044.5px;font-size:12px;color:#0a0a0a;letter-spacing:0.256px;">오후 12:42</div><div class="t" id="t35" style="left:1794.5px;top:1062.5px;font-size:12px;color:#0a0a0a;letter-spacing:0.361px;">2025-12-24</div>
</body></html>
